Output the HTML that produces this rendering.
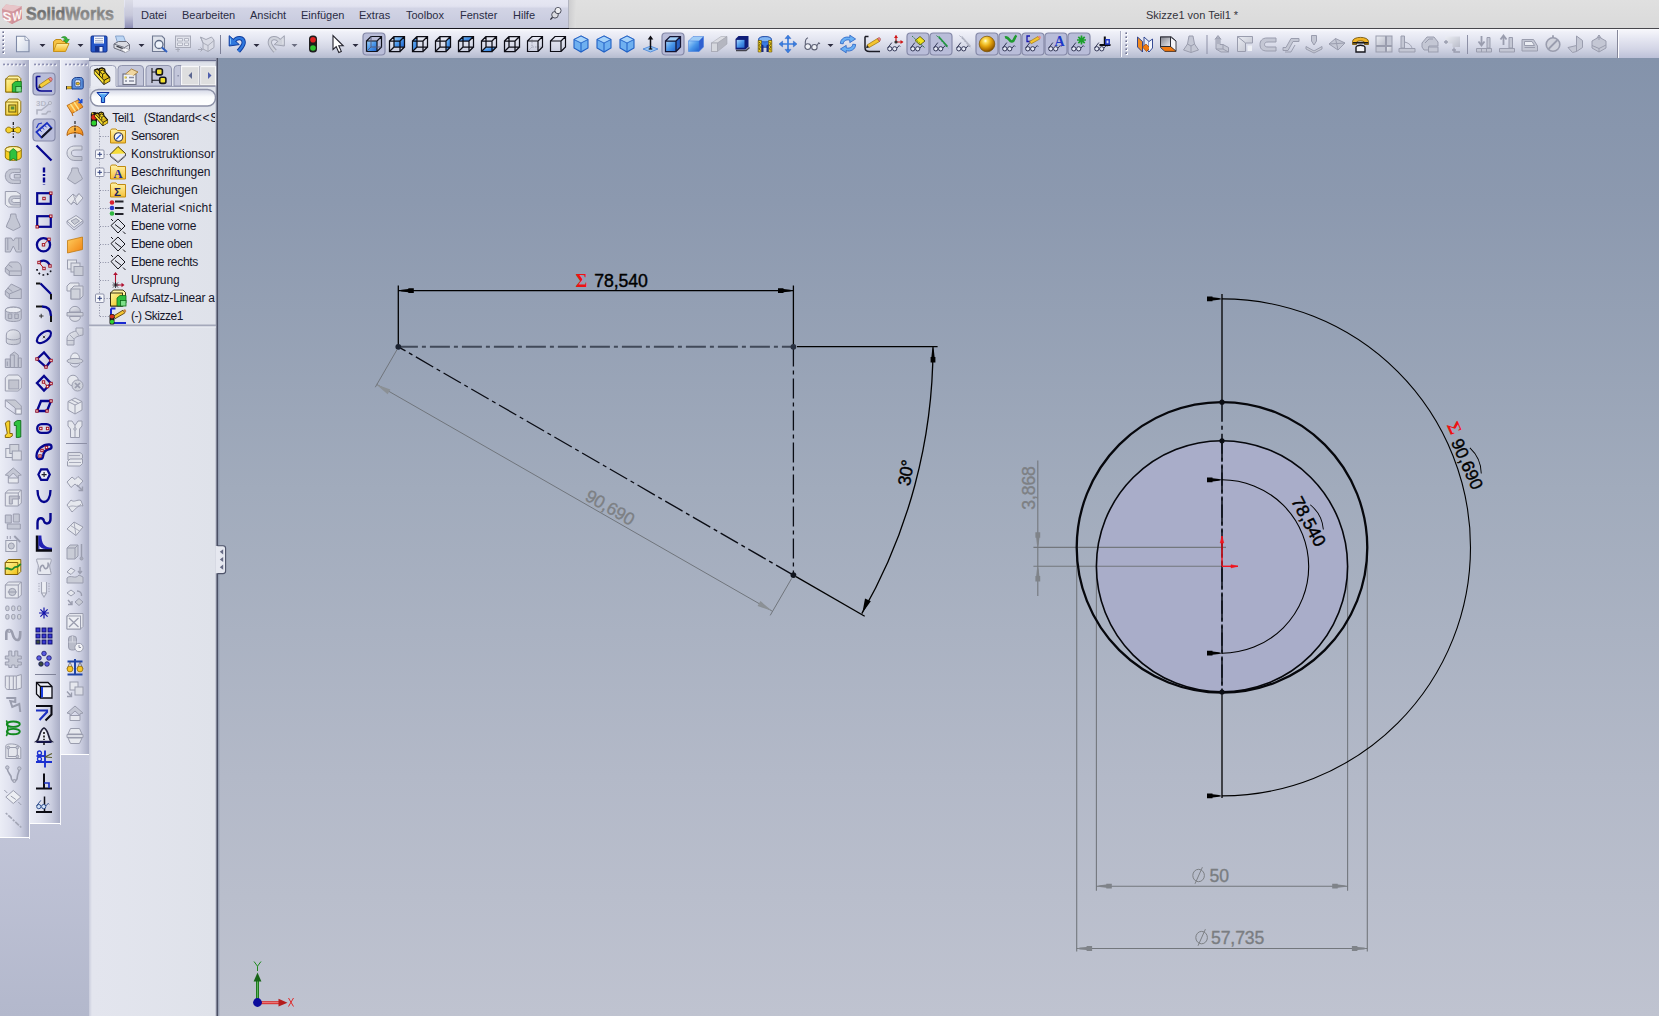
<!DOCTYPE html>
<html><head><meta charset="utf-8">
<style>
*{box-sizing:border-box}
html,body{margin:0;padding:0}
body{width:1659px;height:1016px;position:relative;overflow:hidden;font-family:"Liberation Sans",sans-serif;font-size:11px;color:#1a1a28;background:#b9bdd0}
.abs{position:absolute}
#gfx{left:217px;top:58px;width:1442px;height:958px;background:linear-gradient(#8493ab 0%,#8c99af 15%,#a1abbc 45%,#b3b9c8 75%,#bfc3d0 100%)}
#title{left:0;top:0;width:1659px;height:28px;background:linear-gradient(#e0e0e0,#dadada)}
#titleline{left:0;top:27.7px;width:1659px;height:1.3px;background:#47474d}
#menubar{left:124px;top:0;width:444.6px;height:28px;background:linear-gradient(#e6e7f3 0%,#e2e3f0 22%,#d2d4e5 30%,#c5c8dc 100%);border-right:1px solid #b2b4c0}
#menugrip{left:124.5px;top:0;width:8.5px;height:28px;background:linear-gradient(#dcdde8 0,#c6c7da 55%,#8d8eb5 100%)}
.mi{position:absolute;top:9px;font-size:11px;color:#2a2c44;white-space:nowrap}
#toolbar{left:0;top:29px;width:1659px;height:29px;background:linear-gradient(#fbfbfe 0,#eff0f8 10%,#e4e6f1 35%,#d3d6e5 65%,#bfc4d7 90%,#b5bccf 100%)}
#tbend{left:1617px;top:30px;width:42px;height:28px;background:linear-gradient(#f6f6fb 0,#e6e7f2 30%,#d2d4e5 70%,#bdc1d8 100%);border-left:1px solid #85879a;box-shadow:inset 1px 0 0 #fdfdff}
.col{position:absolute;top:58px;background:linear-gradient(90deg,#ebedf6 0,#e0e2ef 35%,#cbcee0 70%,#a9adc5 100%);border-bottom:1px solid #fff}
#tree{left:89px;top:58px;width:127px;height:958px;background:linear-gradient(90deg,#c9ccdc 0,#e3e5ee 3px,#dfe2ea 100%)}
#treeborder{left:215px;top:58px;width:5px;height:958px;background:linear-gradient(90deg,#d3d6e0 0,#b4b8c8 1.4px,#4a4f64 1.6px,#4a4f64 2.8px,#8c96ab 3px,rgba(140,150,171,0) 5px)}
.tr{position:absolute;left:131px;font-size:12px;color:#16162a;white-space:nowrap;letter-spacing:-0.1px}
svg{position:absolute;left:0;top:0;overflow:visible}
</style></head><body>
<div class="abs" id="gfx"></div>
<div class="abs" id="title"></div>
<div class="abs" id="menubar"></div>
<div class="abs" id="menugrip"></div>
<div class="abs" id="titleline"></div><div class="abs" style="left:568.6px;top:0;width:7px;height:27.7px;background:linear-gradient(90deg,#cdcdcf,#dedede)"></div><div class="abs" style="left:124px;top:27.5px;width:444.6px;height:1.4px;background:#14141c"></div><div class="abs" style="left:0;top:755px;width:89px;height:261px;background:linear-gradient(#c6c9dc,#b3b8cc)"></div>
<div id="menu">
<span class="mi" style="left:141px">Datei</span>
<span class="mi" style="left:182px">Bearbeiten</span>
<span class="mi" style="left:250px">Ansicht</span>
<span class="mi" style="left:301px">Einfügen</span>
<span class="mi" style="left:359px">Extras</span>
<span class="mi" style="left:406px">Toolbox</span>
<span class="mi" style="left:460px">Fenster</span>
<span class="mi" style="left:513px">Hilfe</span>
<span class="mi" style="left:1146px;color:#33333b">Skizze1 von Teil1 *</span>
</div>
<div class="abs" id="toolbar"></div>
<div class="abs" id="tbend"></div>
<!-- left columns -->
<div class="col" style="left:0;width:28.7px;height:780px"></div>
<div class="col" style="left:30px;width:29.7px;height:766px"></div>
<div class="col" style="left:61px;width:27.7px;height:697px"></div><div class="abs" style="left:0;top:57.8px;width:89px;height:2px;background:#f3f4fa"></div><div class="abs" style="left:28.7px;top:58px;width:1.3px;height:781px;background:#f6f7fb"></div><div class="abs" style="left:59.7px;top:58px;width:1.3px;height:767px;background:#f6f7fb"></div>
<div class="abs" id="tree"></div>
<div class="abs" id="treeborder"></div>
<div id="treetext" style="position:absolute;left:0;top:0;width:215.4px;height:400px;overflow:hidden">
<span class="tr" style="left:112.3px;top:111px;letter-spacing:-0.45px">Teil1</span><span class="tr" style="left:143.8px;top:111px;letter-spacing:-0.2px">(Standard</span><span class="tr" style="left:194.7px;top:111px;letter-spacing:0.8px">&lt;&lt;S</span>
<span class="tr" style="top:129px;letter-spacing:-0.473px">Sensoren</span>
<span class="tr" style="top:147px;letter-spacing:0.028px">Konstruktionsor</span>
<span class="tr" style="top:165px;letter-spacing:-0.040px">Beschriftungen</span>
<span class="tr" style="top:183px;letter-spacing:-0.082px">Gleichungen</span>
<span class="tr" style="top:201px;letter-spacing:0.168px">Material &lt;nicht</span>
<span class="tr" style="top:219px;letter-spacing:-0.268px">Ebene vorne</span>
<span class="tr" style="top:237px;letter-spacing:-0.333px">Ebene oben</span>
<span class="tr" style="top:255px;letter-spacing:-0.308px">Ebene rechts</span>
<span class="tr" style="top:273px;letter-spacing:-0.095px">Ursprung</span>
<span class="tr" style="top:291px;letter-spacing:-0.224px">Aufsatz-Linear a</span>
<span class="tr" style="top:309px;letter-spacing:-0.495px">(-) Skizze1</span>
</div>
<svg width="1659" height="1016" viewBox="0 0 1659 1016" style="font-family:'Liberation Sans',sans-serif">
<defs>
<path id="ah" d="M0,0 L-3,-0.9 L-9.5,-1.6 L-9.5,-2.4 L-15,-2.4 L-15,2.4 L-9.5,2.4 L-9.5,1.6 L-3,0.9 Z"/>
</defs>
<!-- LEFT SKETCH -->
<g stroke="#000" stroke-width="1.3" fill="none">
<line x1="398.3" y1="285.5" x2="398.3" y2="345"/>
<line x1="793.4" y1="285.5" x2="793.4" y2="345"/>
<line x1="398.3" y1="290.6" x2="793.4" y2="290.6"/>
<line x1="797" y1="346.6" x2="937.6" y2="346.6"/>
<path d="M933,347 A534.7,534.7 0 0 1 861.8,613.6"/>
<line x1="796" y1="576.6" x2="864.7" y2="616.3"/>
</g>
<use href="#ah" transform="translate(398.8,290.6) rotate(180)" fill="#000"/>
<use href="#ah" transform="translate(793,290.6)" fill="#000"/>
<use href="#ah" transform="translate(933,347.5) rotate(-90)" fill="#000"/>
<path d="M862.3,613 L865,598.5 L870.8,601.2 Z" fill="#000"/>
<g fill="none" stroke-linecap="butt">
<line x1="398.3" y1="346.8" x2="793.4" y2="346.8" stroke="#414959" stroke-width="2" stroke-dasharray="20 4 4 4" stroke-dashoffset="0.4"/>
<line x1="793.4" y1="346.8" x2="793.4" y2="575.1" stroke="#0a0c14" stroke-width="1.3" stroke-dasharray="20 4 4 4" stroke-dashoffset="0.4"/>
<line x1="398.3" y1="346.8" x2="793.4" y2="575.1" stroke="#0a0c14" stroke-width="1.35" stroke-dasharray="20 4 4 4" stroke-dashoffset="11.7"/>
</g>
<circle cx="398.3" cy="346.8" r="2.9" fill="#1b2230"/>
<circle cx="793.4" cy="346.8" r="2.9" fill="#2a3242"/>
<circle cx="793.4" cy="575.1" r="2.9" fill="#12161f"/>
<g stroke="#70757c" stroke-width="1" fill="none">
<line x1="396.8" y1="350" x2="375.3" y2="387.2"/>
<line x1="791.6" y1="578.5" x2="770.2" y2="615.4"/>
<line x1="376.6" y1="384.3" x2="772" y2="611"/>
</g>
<path d="M376,384.3 L390.4,389.4 L387.6,394.2 Z" fill="#8b9095"/>
<path d="M772.2,611 L757.6,605.9 L760.4,601.1 Z" fill="#8b9095"/>
<text x="575.5" y="287" font-size="18" font-weight="bold" fill="#ee1111" font-family="Liberation Serif,serif">Σ</text>
<text x="594.3" y="286.8" font-size="17.7" fill="#000" stroke="#000" stroke-width="0.4" letter-spacing="-0.1">78,540</text>
<text transform="translate(610,507.5) rotate(30)" x="0" y="0" text-anchor="middle" dominant-baseline="central" font-size="17.6" fill="#7d8084" stroke="#7d8084" stroke-width="0.35" letter-spacing="-0.1">90,690</text>
<text transform="translate(906,473) rotate(-80)" x="0" y="0" text-anchor="middle" dominant-baseline="central" font-size="17.7" fill="#000" stroke="#000" stroke-width="0.4" letter-spacing="-0.5">30°</text>

<!-- RIGHT SKETCH -->
<circle cx="1222" cy="566.3" r="125.2" fill="#a9adc9"/>
<g stroke="#73777d" stroke-width="1.1" fill="none">
<line x1="1033.4" y1="547.4" x2="1226" y2="547.4"/>
<line x1="1033.4" y1="566.3" x2="1222" y2="566.3"/>
<line x1="1037.8" y1="460.5" x2="1037.8" y2="596"/>
<line x1="1076.7" y1="547" x2="1076.7" y2="951.6"/>
<line x1="1367.3" y1="547" x2="1367.3" y2="951.6"/>
<line x1="1096.4" y1="566" x2="1096.4" y2="890.7"/>
<line x1="1347.6" y1="566" x2="1347.6" y2="890.7"/>
<line x1="1096.4" y1="886.2" x2="1347.6" y2="886.2"/>
<line x1="1076.7" y1="948.5" x2="1367.3" y2="948.5"/>
</g>
<g fill="#7f8389">
<use href="#ah" transform="translate(1037.8,547.2) rotate(90)"/>
<use href="#ah" transform="translate(1037.8,566.5) rotate(-90)"/>
<use href="#ah" transform="translate(1096.8,886.2) rotate(180)"/>
<use href="#ah" transform="translate(1347.2,886.2)"/>
<use href="#ah" transform="translate(1077.1,948.5) rotate(180)"/>
<use href="#ah" transform="translate(1366.9,948.5)"/>
</g>
<g stroke="#000" fill="none">
<circle cx="1222" cy="547.4" r="145.3" stroke-width="2.3" stroke="#06070c"/>
<circle cx="1222" cy="566.3" r="125.6" stroke-width="1.6" stroke="#06070c"/>
<line x1="1222" y1="294" x2="1222" y2="402" stroke-width="1.3"/>
<line x1="1222" y1="692" x2="1222" y2="798" stroke-width="1.3"/>
<line x1="1222" y1="402.2" x2="1222" y2="692" stroke-width="1.6" stroke="#10131c" stroke-dasharray="20 4 4 4" stroke-dashoffset="0.4"/><line x1="1222" y1="440.8" x2="1222" y2="692" stroke-width="1.6" stroke="#10131c" stroke-dasharray="20 4 4 4" stroke-dashoffset="0.4"/>
<path d="M1222,298.9 A248.5,248.5 0 0 1 1222,795.9" stroke-width="1.1"/>
<path d="M1222,479.8 A86.7,86.7 0 0 1 1222,653.2" stroke-width="1.1"/>
<path transform="translate(1308.5,521.5) rotate(62)" d="M-14,-9.4 Q0,-15.4 14,-9.4" stroke-width="0.9"/>
<path transform="translate(1467,464.5) rotate(66)" d="M-14,-9.4 Q0,-15.4 14,-9.4" stroke-width="0.9"/>
</g>
<g fill="#000"><use href="#ah" transform="translate(1222,298.9)"/><use href="#ah" transform="translate(1222,479.8)"/><use href="#ah" transform="translate(1222,653.2)"/><use href="#ah" transform="translate(1222,795.9)"/></g>
<circle cx="1222" cy="402.2" r="2.6" fill="#0b0d14"/>
<circle cx="1222" cy="440.8" r="2.6" fill="#0b0d14"/>
<circle cx="1222" cy="692" r="2.6" fill="#0b0d14"/>
<g stroke="#f0141e" stroke-width="1.4" fill="#f0141e">
<line x1="1222" y1="566.3" x2="1222" y2="536"/>
<line x1="1222" y1="566.3" x2="1238" y2="566.3"/>
<path d="M1222,536 L1220.2,543 L1223.8,543 Z" stroke-width="0.5"/>
<path d="M1238,566.3 L1231,564.7 L1231,567.9 Z" stroke-width="0.5"/>
</g>
<text transform="translate(1028.5,488) rotate(-90)" text-anchor="middle" dominant-baseline="central" font-size="17.6" fill="#7d8084" stroke="#7d8084" stroke-width="0.35" letter-spacing="-0.1">3,868</text>
<text transform="translate(1308.5,521.5) rotate(62)" text-anchor="middle" dominant-baseline="central" font-size="17.7" fill="#000" stroke="#000" stroke-width="0.4" letter-spacing="-0.1">78,540</text>
<text transform="translate(1467,464) rotate(66)" text-anchor="middle" dominant-baseline="central" font-size="17.7" fill="#000" stroke="#000" stroke-width="0.4" letter-spacing="-0.1">90,690</text>
<text transform="translate(1454.5,428) rotate(66)" text-anchor="middle" dominant-baseline="central" font-size="18" font-weight="bold" fill="#ee1111" font-family="Liberation Serif,serif">Σ</text>
<text x="1209.6" y="882.2" font-size="17.6" fill="#7a7d81" stroke="#7a7d81" stroke-width="0.35" letter-spacing="-0.1">50</text>
<text x="1211" y="944" font-size="17.6" fill="#7a7d81" stroke="#7a7d81" stroke-width="0.35" letter-spacing="-0.1">57,735</text>
<g stroke="#7d8085" stroke-width="1" fill="none">
<ellipse cx="1198.6" cy="875.5" rx="5.8" ry="6.2"/><line x1="1195" y1="883.8" x2="1202.4" y2="867.2"/>
<ellipse cx="1201.6" cy="937.6" rx="5.8" ry="6.2"/><line x1="1198" y1="945.8" x2="1205.4" y2="929.2"/>
</g>
<!-- TRIAD -->
<g>
<line x1="257.5" y1="1002" x2="257.5" y2="979" stroke="#1f7a1f" stroke-width="3"/>
<line x1="257.5" y1="1000" x2="257.5" y2="981" stroke="#6fc06f" stroke-width="0.8"/>
<path d="M257.5,972.5 L253.6,981.5 L261.4,981.5 Z" fill="#176417"/>
<line x1="258" y1="1002.7" x2="281" y2="1002.7" stroke="#d62828" stroke-width="3"/>
<line x1="262" y1="1002.7" x2="279" y2="1002.7" stroke="#f4a0a0" stroke-width="0.8"/>
<path d="M287.5,1002.7 L278.5,998.8 L278.5,1006.6 Z" fill="#b41c1c"/>
<circle cx="257.5" cy="1002.5" r="4.4" fill="#0c0c9c"/>
<path d="M254,961.5L257.5,966.2L261,961.5M257.5,966.2V971" fill="none" stroke="#1f8a1f" stroke-width="1"/>
<path d="M288.5,998L293.5,1006.5M293.5,998L288.5,1006.5" fill="none" stroke="#e02a2a" stroke-width="1"/>
</g>
</svg>
<svg width="1659" height="1016" viewBox="0 0 1659 1016" style="font-family:'Liberation Sans',sans-serif"><defs>
<linearGradient id="gb" x1="0" y1="0" x2="1" y2="1"><stop offset="0" stop-color="#a8d6fb"/><stop offset="0.5" stop-color="#4a97ea"/><stop offset="1" stop-color="#1f62cc"/></linearGradient>
<linearGradient id="gdoc" x1="0" y1="0" x2="1" y2="1"><stop offset="0" stop-color="#ffffff"/><stop offset="1" stop-color="#cdd6e6"/></linearGradient>
<linearGradient id="gfold" x1="0" y1="0" x2="0" y2="1"><stop offset="0" stop-color="#fff0a0"/><stop offset="1" stop-color="#f3b522"/></linearGradient>
<radialGradient id="ggold" cx="0.4" cy="0.3" r="0.7"><stop offset="0" stop-color="#fffde8"/><stop offset="0.18" stop-color="#fbe060"/><stop offset="0.5" stop-color="#e6a810"/><stop offset="0.85" stop-color="#a86a00"/><stop offset="1" stop-color="#7a4a00"/></radialGradient>
<linearGradient id="gyel" x1="0" y1="0" x2="1" y2="1"><stop offset="0" stop-color="#fff6a0"/><stop offset="1" stop-color="#f0c010"/></linearGradient>
<linearGradient id="gor" x1="0" y1="0" x2="1" y2="1"><stop offset="0" stop-color="#ffd060"/><stop offset="1" stop-color="#f08010"/></linearGradient>
<linearGradient id="ggr" x1="0" y1="0" x2="1" y2="1"><stop offset="0" stop-color="#eceef4"/><stop offset="1" stop-color="#b9bcc9"/></linearGradient>
<linearGradient id="ggr2" x1="0" y1="0" x2="1" y2="1"><stop offset="0" stop-color="#80828c"/><stop offset="1" stop-color="#e8e9ee"/></linearGradient><linearGradient id="gsearch" x1="0" y1="0" x2="0" y2="1"><stop offset="0" stop-color="#d4d7e6"/><stop offset="0.45" stop-color="#fafbfd"/><stop offset="1" stop-color="#ffffff"/></linearGradient><linearGradient id="gfold2" x1="0" y1="0" x2="0" y2="1"><stop offset="0" stop-color="#fff3a8"/><stop offset="1" stop-color="#f6c23a"/></linearGradient><linearGradient id="glogo" gradientUnits="userSpaceOnUse" x1="0" y1="7" x2="0" y2="21"><stop offset="0" stop-color="#878787"/><stop offset="0.35" stop-color="#6c6c6c"/><stop offset="1" stop-color="#979797"/></linearGradient><linearGradient id="glogo2" gradientUnits="userSpaceOnUse" x1="0" y1="7" x2="0" y2="21"><stop offset="0" stop-color="#9a9a9a"/><stop offset="0.4" stop-color="#808080"/><stop offset="1" stop-color="#a0a0a0"/></linearGradient></defs>
<rect x="3" y="32" width="2" height="2" fill="#fff"/><rect x="2.4" y="31.4" width="1.6" height="1.6" fill="#6e7191"/>
<rect x="3" y="36" width="2" height="2" fill="#fff"/><rect x="2.4" y="35.4" width="1.6" height="1.6" fill="#6e7191"/>
<rect x="3" y="40" width="2" height="2" fill="#fff"/><rect x="2.4" y="39.4" width="1.6" height="1.6" fill="#6e7191"/>
<rect x="3" y="44" width="2" height="2" fill="#fff"/><rect x="2.4" y="43.4" width="1.6" height="1.6" fill="#6e7191"/>
<rect x="3" y="48" width="2" height="2" fill="#fff"/><rect x="2.4" y="47.4" width="1.6" height="1.6" fill="#6e7191"/>
<rect x="3" y="52" width="2" height="2" fill="#fff"/><rect x="2.4" y="51.4" width="1.6" height="1.6" fill="#6e7191"/>
<g transform="translate(22.5,43.8)"><path d="M-6,-7.5H2.5L6.5,-3.5V8H-6Z" fill="url(#gdoc)" stroke="#7f8aa6" stroke-width="1.1"/><path d="M2.5,-7.5V-3.5H6.5" fill="#f7f9fd" stroke="#8f99b3" stroke-width="0.9"/></g>
<path d="M39.5,44.0 L45.5,44.0 L42.5,47.0 Z" fill="#2b2b3f"/>
<g transform="translate(61,44)"><path d="M-7.5,7.5V-2.5L-5,-4.5H0L1.5,-2.5H4.5V0" fill="#f6c344" stroke="#c08a14" stroke-width="1"/><path d="M-7.5,7.5L-4.5,-0.5H8L4.5,7.5Z" fill="url(#gfold)" stroke="#c8921c" stroke-width="1"/><path d="M0.5,-6.5C3,-8.5 6,-7.5 6.5,-4.5L8.3,-4.7L5.6,-0.8L2.3,-4.1L4.2,-4.3C3.8,-5.8 2.4,-6.4 0.5,-6.5Z" fill="#35b335" stroke="#1b7f1b" stroke-width="0.6"/></g>
<path d="M77.5,44.0 L83.5,44.0 L80.5,47.0 Z" fill="#2b2b3f"/>
<g transform="translate(99,44)"><rect x="-8" y="-8" width="16" height="16" rx="1.2" fill="#2456c8" stroke="#102f8a" stroke-width="1"/><rect x="-5" y="-7.5" width="10" height="7" fill="#f4f6fb"/><path d="M-4,-5.5H4M-4,-3.5H4M-4,-1.8H4" stroke="#9aa4c0" stroke-width="0.8"/><rect x="-4" y="2" width="8.5" height="6" fill="#16328f"/><rect x="0.5" y="3" width="3" height="4.5" fill="#e8ecf8"/></g>
<g transform="translate(121.5,44)"><path d="M-4,-1L-6,-8H2L4.5,-1Z" fill="#bcd6f4" stroke="#7f9cc6" stroke-width="0.9"/><path d="M-7.5,0L-3,-2.5H5L8,0.5V5L3,8L-7.5,4Z" fill="#d9dbe2" stroke="#6a6d7a" stroke-width="1"/><path d="M-7.5,0L3,3.5L8,0.5M3,3.5V8" fill="none" stroke="#6a6d7a" stroke-width="0.9"/><path d="M-5,2.2L1.5,4.6" stroke="#3b3d46" stroke-width="1.3"/><path d="M-1,5.5L4,8.5L8.5,6L4,4Z" fill="#f7f7fa" stroke="#8a8d99" stroke-width="0.6"/></g>
<path d="M138.5,44.0 L144.5,44.0 L141.5,47.0 Z" fill="#2b2b3f"/>
<g transform="translate(159.5,44)"><path d="M-7,-8H2.5L5,-5.5V7.5H-7Z" fill="#dfe3ec" stroke="#6f7890" stroke-width="1.1"/><circle cx="-0.5" cy="0.5" r="4" fill="#eef3fb" stroke="#5d6984" stroke-width="1.3"/><path d="M2.5,3.5L7.5,8" stroke="#2f5fc0" stroke-width="2"/></g>
<g transform="translate(183,44)"><rect x="-7.5" y="-8" width="15" height="11.5" fill="#dfe1ea" stroke="#a7aab8" stroke-width="1"/><path d="M-5.5,-5.5H-0.5V-3H-5.5ZM1.5,-5.5H5.5V-3H1.5ZM-5.5,-1H-0.5V1.5H-5.5ZM1.5,-1H5.5V1.5H1.5Z" fill="#eceef4" stroke="#a7aab8" stroke-width="0.8"/><path d="M-7.5,5.5H-3M-5,3.5V8" stroke="#a7aab8" stroke-width="1.1"/></g>
<g transform="translate(206,44)"><path d="M-5.5,-7L0,-4.5L5.5,-7L8,-4V3.5L2,7.5L-3,5V-1Z" fill="#d9dbe5" stroke="#a5a8b6" stroke-width="1"/><path d="M-3,-1L2,1.5L8,-3.5M2,1.5V7.5M-5.5,-7L-3,-1" fill="none" stroke="#a5a8b6" stroke-width="0.9"/><path d="M-8,5.5H-3.5M-5.5,3.5L-3.5,5.5L-5.5,7.5" fill="none" stroke="#a5a8b6" stroke-width="1"/></g>
<path d="M220.5,35V54" stroke="#7d8098" stroke-width="1"/>
<g transform="translate(237.5,44)"><path d="M-3.5,-3 C-0.5,-7.2 5.8,-6.8 6.2,-1.8 C6.4,1.6 3.4,4.4 0.9,7.2" fill="none" stroke="#0f3c9e" stroke-width="4.3"/><path d="M-8.3,-8.3V2L1.8,0.6Z" fill="#2f78de" stroke="#0f3c9e" stroke-width="1" stroke-linejoin="round"/><path d="M-3.5,-3 C-0.5,-7.2 5.8,-6.8 6.2,-1.8 C6.4,1.6 3.4,4.4 0.9,7.2" fill="none" stroke="#2f78de" stroke-width="2.4"/><path d="M-7,-5.5V0.2" stroke="#7fc0fa" stroke-width="1"/></g>
<path d="M253.5,44.0 L259.5,44.0 L256.5,47.0 Z" fill="#2b2b3f"/>
<g transform="translate(276,44)"><g transform="scale(-1,1)"><path d="M-3.5,-3 C-0.5,-7.2 5.8,-6.8 6.2,-1.8 C6.4,1.6 3.4,4.4 0.9,7.2" fill="none" stroke="#a0a3b2" stroke-width="4.3"/><path d="M-8.3,-8.3V2L1.8,0.6Z" fill="#cfd2db" stroke="#a0a3b2" stroke-width="1" stroke-linejoin="round"/><path d="M-3.5,-3 C-0.5,-7.2 5.8,-6.8 6.2,-1.8 C6.4,1.6 3.4,4.4 0.9,7.2" fill="none" stroke="#cfd2db" stroke-width="2.4"/><path d="M-7,-5.5V0.2" stroke="#e4e6ec" stroke-width="1"/></g></g>
<path d="M291.5,44.0 L297.5,44.0 L294.5,47.0 Z" fill="#6a6d80"/>
<g transform="translate(313,44)"><rect x="-4" y="-8.5" width="8" height="17" rx="3.5" fill="#1d1d1d"/><circle cx="0" cy="-4.2" r="2.8" fill="#e02222"/><circle cx="0" cy="4" r="2.8" fill="#2fc22f"/></g>
<g transform="translate(338,44)"><path d="M-5,-8.5V5.5L-1.8,2.6L0.8,8.5L3.3,7.4L0.8,1.8H5.2Z" fill="#fff" stroke="#22222c" stroke-width="1.1"/></g>
<path d="M352.5,44.0 L358.5,44.0 L355.5,47.0 Z" fill="#2b2b3f"/>
<rect x="363.0" y="33.0" width="22" height="22" rx="3.5" fill="#b9bdd9" stroke="#8589a8" stroke-width="1.2"/>
<g transform="translate(374,44)"><path d="M-7.5,-3L-3.0,-7.5H7.5L3,-3Z" fill="#b9bdd9"/><path d="M3,-3L7.5,-7.5V3.0L3,7.5Z" fill="#b9bdd9"/><rect x="-7.5" y="-3" width="10.5" height="10.5" fill="url(#gb)"/><path d="M-7.5,-3H3V7.5H-7.5ZM-7.5,-3L-3.0,-7.5H7.5V3.0L3,7.5M3,-3L7.5,-7.5" fill="none" stroke="#11131c" stroke-width="1.2"/><path d="M-3,-7.5V3H7.5M-3,3L-7.5,7.5" fill="none" stroke="#555a78" stroke-width="0.9"/></g>
<g transform="translate(397,44)"><path d="M-3.0,-7.5H7.5V3.0H-3.0Z" fill="url(#gb)"/><path d="M-7.5,-3H3V7.5H-7.5ZM-3.0,-7.5H7.5V3.0H-3.0ZM-7.5,-3L-3.0,-7.5M3,-3L7.5,-7.5M-7.5,7.5L-3.0,3.0M3,7.5L7.5,3.0" fill="none" stroke="#0c0c14" stroke-width="1.25"/></g>
<g transform="translate(420,44)"><path d="M-7.5,-3L-3.0,-7.5V3.0L-7.5,7.5Z" fill="url(#gb)"/><path d="M-7.5,-3H3V7.5H-7.5ZM-3.0,-7.5H7.5V3.0H-3.0ZM-7.5,-3L-3.0,-7.5M3,-3L7.5,-7.5M-7.5,7.5L-3.0,3.0M3,7.5L7.5,3.0" fill="none" stroke="#0c0c14" stroke-width="1.25"/></g>
<g transform="translate(443,44)"><path d="M3,-3L7.5,-7.5V3.0L3,7.5Z" fill="url(#gb)"/><path d="M-7.5,-3H3V7.5H-7.5ZM-3.0,-7.5H7.5V3.0H-3.0ZM-7.5,-3L-3.0,-7.5M3,-3L7.5,-7.5M-7.5,7.5L-3.0,3.0M3,7.5L7.5,3.0" fill="none" stroke="#0c0c14" stroke-width="1.25"/></g>
<g transform="translate(466,44)"><path d="M-7.5,-3L-3.0,-7.5H7.5L3,-3Z" fill="url(#gb)"/><path d="M-7.5,-3H3V7.5H-7.5ZM-3.0,-7.5H7.5V3.0H-3.0ZM-7.5,-3L-3.0,-7.5M3,-3L7.5,-7.5M-7.5,7.5L-3.0,3.0M3,7.5L7.5,3.0" fill="none" stroke="#0c0c14" stroke-width="1.25"/></g>
<g transform="translate(489,44)"><path d="M-7.5,7.5L-3.0,3.0H7.5L3,7.5Z" fill="url(#gb)"/><path d="M-7.5,-3H3V7.5H-7.5ZM-3.0,-7.5H7.5V3.0H-3.0ZM-7.5,-3L-3.0,-7.5M3,-3L7.5,-7.5M-7.5,7.5L-3.0,3.0M3,7.5L7.5,3.0" fill="none" stroke="#0c0c14" stroke-width="1.25"/></g>
<g transform="translate(512,44)"><path d="M-7.5,-3H3V7.5H-7.5ZM-3.0,-7.5H7.5V3.0H-3.0ZM-7.5,-3L-3.0,-7.5M3,-3L7.5,-7.5M-7.5,7.5L-3.0,3.0M3,7.5L7.5,3.0" fill="none" stroke="#0c0c14" stroke-width="1.25"/></g>
<g transform="translate(535,44)"><path d="M-3.0,-7.5V3.0H7.5M-7.5,7.5L-3.0,3.0" fill="none" stroke="#9a9cae" stroke-width="0.9" stroke-dasharray="1.5 1.2"/><path d="M-7.5,-3H3V7.5H-7.5ZM-7.5,-3L-3.0,-7.5H7.5V3.0L3,7.5M3,-3L7.5,-7.5" fill="none" stroke="#0c0c14" stroke-width="1.2"/></g>
<g transform="translate(558,44)"><path d="M-7.5,-3H3V7.5H-7.5ZM-7.5,-3L-3.0,-7.5H7.5V3.0L3,7.5M3,-3L7.5,-7.5" fill="none" stroke="#0c0c14" stroke-width="1.2"/></g>
<g transform="translate(581,44)"><path d="M0,-8L7,-4.5V4L0,8L-7,4V-4.5Z" fill="#6fb0f0" stroke="#1f5fc4" stroke-width="1.1"/><path d="M0,-8L7,-4.5L0,-1L-7,-4.5Z" fill="#a8d4fa" stroke="#1f5fc4" stroke-width="0.9"/><path d="M0,-1V8" stroke="#1f5fc4" stroke-width="1"/></g>
<g transform="translate(604,44)"><path d="M0,-8L7,-4.5V4L0,8L-7,4V-4.5Z" fill="#6fb0f0" stroke="#1f5fc4" stroke-width="1.1"/><path d="M0,-8L7,-4.5L0,-1L-7,-4.5Z" fill="#a8d4fa" stroke="#1f5fc4" stroke-width="0.9"/><path d="M0,-1V8" stroke="#1f5fc4" stroke-width="1"/></g>
<g transform="translate(627,44)"><path d="M0,-8L7,-4.5V4L0,8L-7,4V-4.5Z" fill="#6fb0f0" stroke="#1f5fc4" stroke-width="1.1"/><path d="M0,-8L7,-4.5L0,-1L-7,-4.5Z" fill="#a8d4fa" stroke="#1f5fc4" stroke-width="0.9"/><path d="M0,-1V8" stroke="#1f5fc4" stroke-width="1"/></g>
<g transform="translate(650.5,44)"><path d="M-7.5,5L0,2.2L7.5,5L0,8Z" fill="#9cc8f4" stroke="#3f7fd8" stroke-width="0.8"/><path d="M0,5V-5.5" stroke="#0c0c12" stroke-width="1.5"/><path d="M0,-8.5L-2.8,-4.5H2.8Z" fill="#0c0c12"/><path d="M-1.8,5H1.8" stroke="#0c0c12" stroke-width="1.2"/></g>
<rect x="662.0" y="33.0" width="22" height="22" rx="3.5" fill="#b9bdd9" stroke="#8589a8" stroke-width="1.2"/>
<g transform="translate(673,44)"><path d="M-7.5,-3L-3.0,-7.5H7.5L3,-3Z" fill="#9fccf6"/><path d="M3,-3L7.5,-7.5V3.0L3,7.5Z" fill="#2a62c4"/><rect x="-7.5" y="-3" width="10.5" height="10.5" fill="url(#gb)"/><path d="M-7.5,-3H3V7.5H-7.5ZM-7.5,-3L-3.0,-7.5H7.5V3.0L3,7.5M3,-3L7.5,-7.5" fill="none" stroke="#141432" stroke-width="1.25"/></g>
<g transform="translate(696,44)"><path d="M-7.5,-3L-3.0,-7.5H7.5L3,-3Z" fill="#9fccf6"/><path d="M3,-3L7.5,-7.5V3.0L3,7.5Z" fill="#2f5fd0"/><rect x="-7.5" y="-3" width="10.5" height="10.5" fill="url(#gb)"/><path d="M-7.5,-3H3V7.5H-7.5ZM-7.5,-3L-3.0,-7.5H7.5V3.0L3,7.5M3,-3L7.5,-7.5" fill="none" stroke="#3a78dc" stroke-width="0.5"/></g>
<g transform="translate(719,44)"><path d="M-7.5,-1L2,-7.5H8L-1.5,-1Z" fill="#dcdde3" stroke="#a9abb6" stroke-width="0.6"/><path d="M-1.5,-1L8,-7.5V0L-1.5,7.5Z" fill="#b4b6c0" stroke="#a2a4ae" stroke-width="0.6"/><rect x="-7.5" y="-1" width="6" height="8.5" fill="#d6d8de" stroke="#a2a4ae" stroke-width="0.8"/></g>
<g transform="translate(742,43.5)"><path d="M-6.5,-4.5L-3.5,-7.5H6.5V3L3.5,6H-6.5Z" fill="#0e1c78"/><rect x="-5.3" y="-3.6" width="7.8" height="7.8" fill="url(#gb)"/><path d="M-6,7H4L7.5,4" stroke="#2a2a33" stroke-width="1.5" fill="none" opacity="0.85"/></g>
<g transform="translate(765,44)"><path d="M-6.5,-4.5C-6.5,-8.5 6.5,-8.5 6.5,-4.5V5.5C6.5,2.5 -6.5,2.5 -6.5,5.5Z" fill="#3a7ae0" stroke="#123c9c" stroke-width="0.8"/><ellipse cx="0" cy="-4.8" rx="6.3" ry="2.6" fill="#7fb4f2" stroke="#123c9c" stroke-width="0.6"/><path d="M-6.8,-3.5H-3.6V8H-6.8ZM3.6,-3.5H6.8V8H3.6Z" fill="#f4d21c" stroke="#5a4400" stroke-width="0.6"/><path d="M-5.8,-2L-4.6,-0.3L-5.8,1.4L-4.6,3.1L-5.8,4.8L-4.6,6.5M4.6,-2L5.8,-0.3L4.6,1.4L5.8,3.1L4.6,4.8L5.8,6.5" stroke="#4a3800" stroke-width="0.8" fill="none"/><path d="M-3.6,0V8H-1.5V1.5M3.6,0V8H1.5V1.5" fill="#1a2a7c" stroke="none"/></g>
<g transform="translate(788,44)"><path d="M0,-7V7M-7,0H7" stroke="#3a7ee0" stroke-width="1.7"/><path d="M0,-9L-3,-5.4H3ZM0,9L-3,5.4H3ZM-9,0L-5.4,-3V3ZM9,0L5.4,-3V3Z" fill="#3a7ee0" stroke="#1f55b8" stroke-width="0.4"/></g>
<g transform="translate(811,44)"><circle cx="-3.2" cy="2.6" r="2.9" fill="#eef0f6" stroke="#5e6276" stroke-width="1.1"/><circle cx="3.4" cy="3.2" r="2.7" fill="#eef0f6" stroke="#5e6276" stroke-width="1.1"/><path d="M-5.6,0.8C-6,-2.5 -5,-5.5 -3,-6.2M-0.4,2.6L0.8,2.8M5.8,1.8L7.8,-1.2L9,-0.2" fill="none" stroke="#5e6276" stroke-width="1.1"/></g>
<path d="M827.5,44.0 L833.5,44.0 L830.5,47.0 Z" fill="#2b2b3f"/>
<g transform="translate(848,44)"><path d="M-7.6,-0.5C-7.6,-5.5 -2.5,-8 1.8,-6.6L1.8,-8.8L7.6,-5L1.8,-1.4V-3.8C-1.5,-4.8 -4.6,-3.2 -4.8,-0.2Z" fill="#6ab0f4" stroke="#2460c4" stroke-width="0.8"/><path d="M7.6,0.5C7.6,5.5 2.5,8 -1.8,6.6L-1.8,8.8L-7.6,5L-1.8,1.4V3.8C1.5,4.8 4.6,3.2 4.8,0.2Z" fill="#6ab0f4" stroke="#2460c4" stroke-width="0.8"/></g>
<g transform="translate(872,44)"><path d="M-7,-7.5H-3.5M-7,-7.5V3.5C-7,6 -5,7.5 -2.5,7.5H8" fill="none" stroke="#1b1b24" stroke-width="1.5"/><path d="M-5,1L5.5,-5.5L7.5,-2.5L-3,3.6Z" fill="#f4c430" stroke="#9a6f00" stroke-width="0.7"/><path d="M5.5,-5.5L6.8,-6.3C7.8,-6.8 9,-5 8.2,-3.6L7.5,-2.5Z" fill="#ee8888" stroke="#a04040" stroke-width="0.6"/><path d="M-5,1L-6,4.2L-3,3.6Z" fill="#222"/></g>
<g transform="translate(895,44)"><circle cx="-5.2" cy="4.8" r="2.15" fill="#e6eaf6" stroke="#2c3050" stroke-width="0.95"/><circle cx="-0.3" cy="4.8" r="2.15" fill="#e6eaf6" stroke="#2c3050" stroke-width="0.95"/><path d="M-7.3,4 L-3.2,-1.4 M1.8,4.2 L4.2,1.6 L5.2,2.6" fill="none" stroke="#2c3050" stroke-width="0.95"/><path d="M1,-2V-8.5M1,-2H7.5" stroke="#d01818" stroke-width="1.2"/><path d="M1,-9L-1,-6H3ZM8.5,-2L5.5,-4V0Z" fill="#d01818"/><circle cx="1" cy="-2" r="1.6" fill="#333"/></g>
<rect x="907.0" y="33.0" width="22" height="22" rx="3.5" fill="#b9bdd9" stroke="#8589a8" stroke-width="1.2"/>
<g transform="translate(918,44)"><circle cx="-5.2" cy="4.8" r="2.15" fill="#e6eaf6" stroke="#2c3050" stroke-width="0.95"/><circle cx="-0.3" cy="4.8" r="2.15" fill="#e6eaf6" stroke="#2c3050" stroke-width="0.95"/><path d="M-7.3,4 L-3.2,-1.4 M1.8,4.2 L4.2,1.6 L5.2,2.6" fill="none" stroke="#2c3050" stroke-width="0.95"/><path d="M-3,-3.5L2,-7.5L7,-3L2,1Z" fill="#f2e21c" stroke="#4a4a10" stroke-width="0.8"/><path d="M-6,-8L7,4" stroke="#2a7a3a" stroke-width="0.9" stroke-dasharray="2 1"/></g>
<rect x="930.0" y="33.0" width="22" height="22" rx="3.5" fill="#b9bdd9" stroke="#8589a8" stroke-width="1.2"/>
<g transform="translate(941,44)"><circle cx="-5.2" cy="4.8" r="2.15" fill="#e6eaf6" stroke="#2c3050" stroke-width="0.95"/><circle cx="-0.3" cy="4.8" r="2.15" fill="#e6eaf6" stroke="#2c3050" stroke-width="0.95"/><path d="M-7.3,4 L-3.2,-1.4 M1.8,4.2 L4.2,1.6 L5.2,2.6" fill="none" stroke="#2c3050" stroke-width="0.95"/><path d="M-2.5,-7.5L6.5,2.5" stroke="#1f9a3f" stroke-width="1.6"/><path d="M-4.5,-8.5L7.5,4.5" stroke="#1f7a3f" stroke-width="0.8" stroke-dasharray="2 1.5"/></g>
<g transform="translate(964,44)"><circle cx="-5.2" cy="4.8" r="2.15" fill="#e6eaf6" stroke="#2c3050" stroke-width="0.95"/><circle cx="-0.3" cy="4.8" r="2.15" fill="#e6eaf6" stroke="#2c3050" stroke-width="0.95"/><path d="M-7.3,4 L-3.2,-1.4 M1.8,4.2 L4.2,1.6 L5.2,2.6" fill="none" stroke="#2c3050" stroke-width="0.95"/><path d="M-2.5,-7.5L6.5,2.5" stroke="#b5b8c6" stroke-width="1.6"/><path d="M-4.5,-8.5L7.5,4.5" stroke="#9a9db0" stroke-width="0.8" stroke-dasharray="2 1.5"/></g>
<rect x="976.0" y="33.0" width="22" height="22" rx="3.5" fill="#b9bdd9" stroke="#8589a8" stroke-width="1.2"/>
<g transform="translate(987,44)"><circle cx="0" cy="0" r="7.8" fill="url(#ggold)" stroke="#7a5200" stroke-width="0.7"/></g>
<rect x="999.0" y="33.0" width="22" height="22" rx="3.5" fill="#b9bdd9" stroke="#8589a8" stroke-width="1.2"/>
<g transform="translate(1010,44)"><circle cx="-5.2" cy="4.8" r="2.15" fill="#e6eaf6" stroke="#2c3050" stroke-width="0.95"/><circle cx="-0.3" cy="4.8" r="2.15" fill="#e6eaf6" stroke="#2c3050" stroke-width="0.95"/><path d="M-7.3,4 L-3.2,-1.4 M1.8,4.2 L4.2,1.6 L5.2,2.6" fill="none" stroke="#2c3050" stroke-width="0.95"/><path d="M-5,-6.5C-1,-8 -1,-2 2,-2.5C5,-3 4,-7 6.5,-8.5" fill="none" stroke="#1f9a2f" stroke-width="2.6"/></g>
<rect x="1022.0" y="33.0" width="22" height="22" rx="3.5" fill="#b9bdd9" stroke="#8589a8" stroke-width="1.2"/>
<g transform="translate(1033,44)"><circle cx="-5.2" cy="4.8" r="2.15" fill="#e6eaf6" stroke="#2c3050" stroke-width="0.95"/><circle cx="-0.3" cy="4.8" r="2.15" fill="#e6eaf6" stroke="#2c3050" stroke-width="0.95"/><path d="M-7.3,4 L-3.2,-1.4 M1.8,4.2 L4.2,1.6 L5.2,2.6" fill="none" stroke="#2c3050" stroke-width="0.95"/><path d="M-3,-8H-6V-2.5H0" fill="none" stroke="#1818b0" stroke-width="1.3"/><path d="M-3.5,-2.5L5,-7.5L6.8,-5L-1.8,-0.2Z" fill="#f4c430" stroke="#9a6f00" stroke-width="0.6"/><path d="M5,-7.5L6.4,-8.2C7.4,-8.4 8.2,-6.6 7.6,-5.6L6.8,-5Z" fill="#ee8888"/></g>
<rect x="1045.0" y="33.0" width="22" height="22" rx="3.5" fill="#b9bdd9" stroke="#8589a8" stroke-width="1.2"/>
<g transform="translate(1056,44)"><circle cx="-5.2" cy="4.8" r="2.15" fill="#e6eaf6" stroke="#2c3050" stroke-width="0.95"/><circle cx="-0.3" cy="4.8" r="2.15" fill="#e6eaf6" stroke="#2c3050" stroke-width="0.95"/><path d="M-7.3,4 L-3.2,-1.4 M1.8,4.2 L4.2,1.6 L5.2,2.6" fill="none" stroke="#2c3050" stroke-width="0.95"/><text x="-1.5" y="1.5" font-family="Liberation Serif,serif" font-weight="bold" font-size="14" fill="#2038c8">A</text></g>
<rect x="1068.0" y="33.0" width="22" height="22" rx="3.5" fill="#b9bdd9" stroke="#8589a8" stroke-width="1.2"/>
<g transform="translate(1079,44)"><circle cx="-5.2" cy="4.8" r="2.15" fill="#e6eaf6" stroke="#2c3050" stroke-width="0.95"/><circle cx="-0.3" cy="4.8" r="2.15" fill="#e6eaf6" stroke="#2c3050" stroke-width="0.95"/><path d="M-7.3,4 L-3.2,-1.4 M1.8,4.2 L4.2,1.6 L5.2,2.6" fill="none" stroke="#2c3050" stroke-width="0.95"/><path d="M2.5,-8.5V0.5M-2,-4H7M-0.7,-7.2L5.7,-0.8M-0.7,-0.8L5.7,-7.2" stroke="#1aa02a" stroke-width="1.7"/></g>
<g transform="translate(1102,44)"><circle cx="-5.2" cy="4.8" r="2.15" fill="#e6eaf6" stroke="#2c3050" stroke-width="0.95"/><circle cx="-0.3" cy="4.8" r="2.15" fill="#e6eaf6" stroke="#2c3050" stroke-width="0.95"/><path d="M-7.3,4 L-3.2,-1.4 M1.8,4.2 L4.2,1.6 L5.2,2.6" fill="none" stroke="#2c3050" stroke-width="0.95"/><path d="M-2.5,1H8.5M2.8,-7.5V1" stroke="#0c0c12" stroke-width="2"/><path d="M3.8,-4.2H7.2V0H3.8Z" fill="none" stroke="#2038c8" stroke-width="1.5"/></g>
<path d="M1121.5,31V57" stroke="#f8f9fc" stroke-width="1"/><path d="M1120.5,31V57" stroke="#a9acc2" stroke-width="1"/>
<rect x="1126" y="33" width="2" height="2" fill="#fff"/><rect x="1125.4" y="32.4" width="1.6" height="1.6" fill="#6e7191"/>
<rect x="1126" y="37" width="2" height="2" fill="#fff"/><rect x="1125.4" y="36.4" width="1.6" height="1.6" fill="#6e7191"/>
<rect x="1126" y="41" width="2" height="2" fill="#fff"/><rect x="1125.4" y="40.4" width="1.6" height="1.6" fill="#6e7191"/>
<rect x="1126" y="45" width="2" height="2" fill="#fff"/><rect x="1125.4" y="44.4" width="1.6" height="1.6" fill="#6e7191"/>
<rect x="1126" y="49" width="2" height="2" fill="#fff"/><rect x="1125.4" y="48.4" width="1.6" height="1.6" fill="#6e7191"/>
<rect x="1126" y="53" width="2" height="2" fill="#fff"/><rect x="1125.4" y="52.4" width="1.6" height="1.6" fill="#6e7191"/>
<g transform="translate(1145,44)"><path d="M-7.5,-7L-2.5,-2.5V8L-7.5,3Z" fill="#f08a20" stroke="#223a8a" stroke-width="0.9"/><path d="M-1,-7L4,-2.5V8L-1,3Z" fill="#e8ecf8" stroke="#223a8a" stroke-width="0.9"/><path d="M-2.5,3L1,0L5,4L1.5,7.5Z" fill="#f07a10" stroke="#8a3a00" stroke-width="0.6"/><path d="M4,-2.5L7.5,-5V4L4,8" fill="#f4f6fc" stroke="#223a8a" stroke-width="0.9"/></g>
<g transform="translate(1168,44)"><path d="M-7.5,-7H3.5L8,-3V7.5H-3L-7.5,3.5Z" fill="#f4f4f8" stroke="#2c2d36" stroke-width="0.9"/><path d="M-7.5,2.5H2.5L7.5,7H-3Z" fill="#f07a10" stroke="#b85400" stroke-width="0.6"/><rect x="-7.5" y="-7" width="10" height="9.5" fill="url(#ggr2)" stroke="#2c2d36" stroke-width="1"/><path d="M2.5,-7L8,-3M2.5,2.5L8,7" stroke="#2c2d36" stroke-width="0.8"/></g>
<g transform="translate(1191,44)"><g fill="#c4c7d4" stroke="#9a9dae" stroke-width="1"><path d="M-2,-8H2L3.5,0L7.5,6L0,8.5L-7.5,6L-3.5,0Z"/><path d="M-3.5,0L0,2L3.5,0M0,2V8.5" fill="none"/></g></g>
<path d="M1207,35V54" stroke="#8d90a6" stroke-width="1"/>
<g transform="translate(1222,44)"><g fill="#c4c7d4" stroke="#9a9dae" stroke-width="1"><path d="M-6,-6V5L-1,8H6.5V3.5L1,0.5H-2V-6Z"/><path d="M-4,-8.5L-7,-4.5M-4,-8.5L-1,-4.5M-4,-8V0" fill="none"/><path d="M-6,5H1V0.5M1,5L6.5,8" fill="none"/></g></g>
<g transform="translate(1245,44)"><g fill="#c4c7d4" stroke="#9a9dae" stroke-width="1"><path d="M-7.5,-7.5H7.5V-1H0.5V7.5H-7.5Z" fill="url(#ggr)"/><path d="M-7.5,-7.5L0.5,-1" fill="none"/><path d="M2.5,1.5H7V7H2.5Z" fill="#eef0f5" stroke="none"/></g></g>
<g transform="translate(1268,44)"><g fill="#c4c7d4" stroke="#9a9dae" stroke-width="1"><path d="M8,-6H-1C-6,-6 -8,-3 -8,0.5C-8,4.5 -6,7 -1,7H8V3H0C-2.5,3 -3.5,2 -3.5,0.5C-3.5,-1 -2.5,-2 0,-2H8Z"/></g></g>
<g transform="translate(1291,44)"><g fill="#c4c7d4" stroke="#9a9dae" stroke-width="1"><path d="M-8,6.5H-3L2,-2.5H8V-5.5H0L-5,3.5H-8Z"/><path d="M-6,8H0L4,1" fill="none"/></g></g>
<g transform="translate(1314,44)"><g fill="#c4c7d4" stroke="#9a9dae" stroke-width="1"><path d="M-2.5,-8.5H2.5V-3L0,1L-2.5,-3Z"/><path d="M-8,2.5L0,7L8,2.5V5L0,9L-8,5Z" fill="#c9ccd6"/></g></g>
<g transform="translate(1337,44)"><g fill="#c4c7d4" stroke="#9a9dae" stroke-width="1"><path d="M-8,0L-1.5,-5.5L8,-1L1,6Z"/><path d="M-1.5,-5.5L1,6M-8,0L8,-1" fill="none"/></g></g>
<g transform="translate(1360.5,44)"><path d="M-8,-2.5C-8,-8 8,-8 8,-2.5V0.5H4V-2C3,-3.5 -3,-3.5 -4,-2V0.5H-8Z" fill="#f0b428" stroke="#6a4a00" stroke-width="0.8"/><path d="M-7.5,-1.2H7.5" stroke="#1a1a1a" stroke-width="1.6"/><path d="M-4.5,8V3.5C-4.5,0.5 4.5,0.5 4.5,3.5V8Z" fill="#f4f4f6" stroke="#16161c" stroke-width="1.4"/></g>
<g transform="translate(1384,44)"><g fill="#c4c7d4" stroke="#9a9dae" stroke-width="1"><rect x="-8" y="-8" width="9.5" height="9.5" fill="url(#ggr)"/><rect x="2.5" y="-8" width="5.5" height="9.5"/><rect x="-8" y="2.5" width="9.5" height="5.5"/><rect x="2.5" y="2.5" width="5.5" height="5.5" fill="url(#ggr)"/></g></g>
<g transform="translate(1407,44)"><g fill="#c4c7d4" stroke="#9a9dae" stroke-width="1"><path d="M-6,-8H-2.5V4H-6Z"/><path d="M-8,4.5H8V8H-8Z"/><path d="M-2.5,-2C2,-1 4.5,1.5 5,4.5" fill="none"/></g></g>
<g transform="translate(1430,44)"><g fill="#c4c7d4" stroke="#9a9dae" stroke-width="1"><path d="M-8,-1L-3,-7H4L8,-2V2H-1V6H-6L-8,3Z"/><rect x="-1.5" y="3" width="9.5" height="5"/><path d="M-5,-1L-1,-5H3" fill="none"/></g></g>
<g transform="translate(1453,44)"><g fill="#c4c7d4" stroke="#9a9dae" stroke-width="1"><path d="M-7.5,-7.5H7V3H-0.5V-0.5H-7.5Z" fill="url(#ggr)" stroke="none"/><path d="M-7,-4V0M-9,-2H-5M1,3.5V8H7M-1,6H3" fill="none" stroke-width="1.3"/></g></g>
<path d="M1467.5,35V54" stroke="#8d90a6" stroke-width="1"/>
<g transform="translate(1484,44)"><g fill="#c4c7d4" stroke="#9a9dae" stroke-width="1"><path d="M-2.5,-8V0.5M-5.5,-2.5L-2.5,1.5L0.5,-2.5" fill="none" stroke-width="1.8"/><path d="M3,-6.5H6V4H3Z"/><path d="M-7.5,4.5H7.5V8H-7.5ZM-2.5,4.5V8M2.5,4.5V8"/></g></g>
<g transform="translate(1507,44)"><g fill="#c4c7d4" stroke="#9a9dae" stroke-width="1"><path d="M-3.5,1V-7.5M-6.5,-4.5L-3.5,-8.5L-0.5,-4.5" fill="none" stroke-width="1.8"/><path d="M2,-6.5H5.5V4H2Z"/><path d="M-7.5,4.5H7.5V8H-7.5Z"/></g></g>
<g transform="translate(1529.5,44)"><g fill="#c4c7d4" stroke="#9a9dae" stroke-width="1"><path d="M-7.5,-4.5H4L8,2V7H-7.5Z"/><path d="M-5,-2.5H2.5L5,1.5H-5ZM-5,3.5H5.5" fill="#eceef4"/></g></g>
<g transform="translate(1553,44)"><g fill="#c4c7d4" stroke="#9a9dae" stroke-width="1"><circle cx="0" cy="0.5" r="6.8" fill="#d0d2dc" stroke-width="1.6"/><path d="M-4.5,5L4.5,-4M0,-8.8V-6" fill="none" stroke-width="1.8"/></g></g>
<g transform="translate(1576,44)"><g fill="#c4c7d4" stroke="#9a9dae" stroke-width="1"><path d="M0.5,-8L6.5,-3.5V3.5L0.5,7.5Z"/><path d="M-8,3.5L0.5,1.5V7.5L-3.5,8.5Z"/></g></g>
<g transform="translate(1599,44)"><g fill="#c4c7d4" stroke="#9a9dae" stroke-width="1"><path d="M0,-7L7,-3V4L0,8L-7,4V-3Z"/><path d="M-7,1.5L0,4.5L7,1M0,4.5V8M0,-9V-4M-2,-6L0,-9L2,-6" fill="none"/></g></g>
<rect x="4" y="64.4" width="1.8" height="1.8" fill="#fdfdff"/><rect x="3.2" y="63.60000000000001" width="1.7" height="1.7" fill="#7f82a8"/>
<rect x="8" y="64.4" width="1.8" height="1.8" fill="#fdfdff"/><rect x="7.2" y="63.60000000000001" width="1.7" height="1.7" fill="#7f82a8"/>
<rect x="12" y="64.4" width="1.8" height="1.8" fill="#fdfdff"/><rect x="11.2" y="63.60000000000001" width="1.7" height="1.7" fill="#7f82a8"/>
<rect x="16" y="64.4" width="1.8" height="1.8" fill="#fdfdff"/><rect x="15.2" y="63.60000000000001" width="1.7" height="1.7" fill="#7f82a8"/>
<rect x="20" y="64.4" width="1.8" height="1.8" fill="#fdfdff"/><rect x="19.2" y="63.60000000000001" width="1.7" height="1.7" fill="#7f82a8"/>
<rect x="24" y="64.4" width="1.8" height="1.8" fill="#fdfdff"/><rect x="23.2" y="63.60000000000001" width="1.7" height="1.7" fill="#7f82a8"/>
<rect x="35" y="64.4" width="1.8" height="1.8" fill="#fdfdff"/><rect x="34.2" y="63.60000000000001" width="1.7" height="1.7" fill="#7f82a8"/>
<rect x="39" y="64.4" width="1.8" height="1.8" fill="#fdfdff"/><rect x="38.2" y="63.60000000000001" width="1.7" height="1.7" fill="#7f82a8"/>
<rect x="43" y="64.4" width="1.8" height="1.8" fill="#fdfdff"/><rect x="42.2" y="63.60000000000001" width="1.7" height="1.7" fill="#7f82a8"/>
<rect x="47" y="64.4" width="1.8" height="1.8" fill="#fdfdff"/><rect x="46.2" y="63.60000000000001" width="1.7" height="1.7" fill="#7f82a8"/>
<rect x="51" y="64.4" width="1.8" height="1.8" fill="#fdfdff"/><rect x="50.2" y="63.60000000000001" width="1.7" height="1.7" fill="#7f82a8"/>
<rect x="55" y="64.4" width="1.8" height="1.8" fill="#fdfdff"/><rect x="54.2" y="63.60000000000001" width="1.7" height="1.7" fill="#7f82a8"/>
<rect x="66" y="64.4" width="1.8" height="1.8" fill="#fdfdff"/><rect x="65.2" y="63.60000000000001" width="1.7" height="1.7" fill="#7f82a8"/>
<rect x="70" y="64.4" width="1.8" height="1.8" fill="#fdfdff"/><rect x="69.2" y="63.60000000000001" width="1.7" height="1.7" fill="#7f82a8"/>
<rect x="74" y="64.4" width="1.8" height="1.8" fill="#fdfdff"/><rect x="73.2" y="63.60000000000001" width="1.7" height="1.7" fill="#7f82a8"/>
<rect x="78" y="64.4" width="1.8" height="1.8" fill="#fdfdff"/><rect x="77.2" y="63.60000000000001" width="1.7" height="1.7" fill="#7f82a8"/>
<rect x="82" y="64.4" width="1.8" height="1.8" fill="#fdfdff"/><rect x="81.2" y="63.60000000000001" width="1.7" height="1.7" fill="#7f82a8"/>
<rect x="86" y="64.4" width="1.8" height="1.8" fill="#fdfdff"/><rect x="85.2" y="63.60000000000001" width="1.7" height="1.7" fill="#7f82a8"/>
<g transform="translate(13.3,84)"><path d="M-7.5,-5L-4.5,-8H5L7.5,-5.5V5L4.5,8H-7.5Z" fill="#fff3a0" stroke="#8a6a00" stroke-width="0.9"/><rect x="-7.5" y="-5" width="12" height="13" fill="url(#gyel)" stroke="#8a6a00" stroke-width="0.9"/><path d="M-1,0L2,-2.5H8V4.5L5.5,8H-1Z" fill="#2fbf3f" stroke="#0f6a1a" stroke-width="0.8"/><rect x="2.5" y="2.5" width="5.5" height="5.5" fill="#7fe08a" stroke="#0f6a1a" stroke-width="0.8"/></g>
<g transform="translate(13.3,107)"><path d="M-7.5,-5L-4.5,-8H5L7.5,-5.5V5L4.5,8H-7.5Z" fill="#fff3a0" stroke="#8a6a00" stroke-width="0.9"/><rect x="-7.5" y="-5" width="12" height="13" fill="url(#gyel)" stroke="#8a6a00" stroke-width="0.9"/><rect x="-4.5" y="-2" width="7" height="7" fill="#e8d23a" stroke="#6a5a10" stroke-width="1"/><rect x="-2.5" y="-0.5" width="3.5" height="3" fill="#5a8a3a"/></g>
<g transform="translate(13.3,130)"><path d="M-7.5,0C-7.5,-3.5 -3,-3.5 -2,-1.5H2C3,-3.5 7.5,-3.5 7.5,0C7.5,3.5 3,3.5 2,1.5H-2C-3,3.5 -7.5,3.5 -7.5,0Z" fill="#f6d22c" stroke="#8a6a00" stroke-width="0.9"/><path d="M0,-8V8" stroke="#111" stroke-width="1.2" stroke-dasharray="3 1.5 1 1.5"/></g>
<g transform="translate(13.3,153)"><path d="M-8,-3.5C-8,-7.5 8,-7.5 8,-3.5V4C8,8.5 -8,8.5 -8,4Z" fill="#f4cf22" stroke="#8a6a00" stroke-width="0.9"/><ellipse cx="0" cy="-3.5" rx="8" ry="3" fill="#fff3a0" stroke="#8a6a00" stroke-width="0.8"/><path d="M-3.5,7.5V-1.5L0,-4.5L3.5,-1.5V7.5L0,5.5Z" fill="#2fc23f" stroke="#0f6a1a" stroke-width="0.7"/></g>
<g transform="translate(13.3,176)"><g fill="#c4c7d4" stroke="#9a9dae" stroke-width="1"><path d="M7,-7H0C-5,-7 -8,-4 -8,0C-8,4 -5,7.5 0,7.5H7V4H1C-2,4 -3.5,2.5 -3.5,0C-3.5,-2.5 -2,-3.5 1,-3.5H7Z"/><path d="M1,-1.5H7V2H1Z"/></g></g>
<g transform="translate(13.3,199)"><g fill="#c4c7d4" stroke="#9a9dae" stroke-width="1"><path d="M-8,-7.5H3L7,-5V8H-5L-8,5.5Z" fill="#e7e9ef"/><path d="M7,-3H0C-3,-3 -4.5,-1 -4.5,1.5C-4.5,4 -3,6 0,6H7V3.5H1C-0.5,3.5 -1.5,2.8 -1.5,1.5C-1.5,0.2 -0.5,-0.5 1,-0.5H7Z"/></g></g>
<g transform="translate(13.3,222)"><g fill="#c4c7d4" stroke="#9a9dae" stroke-width="1"><path d="M-2.5,-8H2.5C2.5,-3 6.5,1 7,5L0,8.5L-7,5C-6.5,1 -2.5,-3 -2.5,-8Z"/></g></g>
<g transform="translate(13.3,245)"><g fill="#c4c7d4" stroke="#9a9dae" stroke-width="1"><path d="M-8,-7H-2L0,-4L2,-7H8V7H3L0,1L-3,7H-8Z"/><path d="M-5.5,-7V5M5.5,-7V5" fill="none"/></g></g>
<g transform="translate(13.3,268)"><g fill="#c4c7d4" stroke="#9a9dae" stroke-width="1"><path d="M-8,0L-3,-6H3C6,-6 8,-3 8,0V7.5H-4L-8,4Z"/><path d="M-8,0L-4,3V7.5M-4,3H8M-5,-3.5L-1,-0.5" fill="none"/></g></g>
<g transform="translate(13.3,291)"><g fill="#c4c7d4" stroke="#9a9dae" stroke-width="1"><path d="M-8,0L-2,-7L8,-2V7.5H-4L-8,4Z"/><path d="M-8,0L-4,3V7.5M-4,3L8,-2M-5.5,-3L-1,0.5" fill="none"/></g></g>
<g transform="translate(13.3,314)"><g fill="#c4c7d4" stroke="#9a9dae" stroke-width="1"><path d="M-8,-4C-8,-8 8,-8 8,-4V4.5C8,8.5 -8,8.5 -8,4.5Z"/><ellipse cx="0" cy="-4" rx="8" ry="2.8" fill="#e9ebf1"/><path d="M-5,0H-1.5V4.5H-5ZM1.5,0H5V4.5H1.5Z" fill="#bfc2cd"/></g></g>
<g transform="translate(13.3,337)"><g fill="#c4c7d4" stroke="#9a9dae" stroke-width="1"><path d="M-7,-2C-7,-9 7,-9 7,-2V5C7,8.5 -7,8.5 -7,5Z" fill="url(#ggr)"/><path d="M-7,1C-4,3.5 4,3.5 7,1" fill="none"/></g></g>
<g transform="translate(13.3,360)"><g fill="#c4c7d4" stroke="#9a9dae" stroke-width="1"><path d="M-8,-1H-3V7.5H-8ZM-3,-5L1,-8L5,-5V7.5H-3ZM5,-2H8V7.5H5Z"/><path d="M-3,-5H1V7.5M-6,1.5V6" fill="none"/></g></g>
<g transform="translate(13.3,383)"><g fill="#c4c7d4" stroke="#9a9dae" stroke-width="1"><path d="M-8,-5L-5,-8H5L8,-5V5L5,8H-8Z" fill="#e4e6ed"/><rect x="-4.5" y="-3" width="10" height="9" fill="#c2c4cf"/></g></g>
<g transform="translate(13.3,406)"><g fill="#c4c7d4" stroke="#9a9dae" stroke-width="1"><path d="M-8,-6H2L8,0V8H2V2L-8,-6Z" fill="#c6c9d3"/><path d="M-8,-6V1L2,8" fill="none"/><rect x="2.5" y="3" width="5.5" height="5" fill="#eef0f5"/></g></g>
<g transform="translate(13.3,429)"><path d="M-8,-6L-5.5,-8H-3.5V4.5H-1V7L-3.5,8.5H-8V6L-6,4.5Z" fill="#f6d22c" stroke="#7a5a00" stroke-width="0.9"/><path d="M1,-6.5L4,-8.5H7.5V8L4.5,8.5H3V-3.5H1Z" fill="#2fc23f" stroke="#0f6a1a" stroke-width="0.9"/></g>
<g transform="translate(13.3,452)"><g fill="#c4c7d4" stroke="#9a9dae" stroke-width="1"><rect x="-7.5" y="-3.5" width="9" height="9" fill="#e4e6ed"/><rect x="-3.5" y="-7.5" width="9" height="9" fill="#d0d3dc"/><rect x="-1" y="-1" width="9" height="9" fill="#dcdee6"/></g></g>
<g transform="translate(13.3,475)"><g fill="#c4c7d4" stroke="#9a9dae" stroke-width="1"><path d="M-8,0L0,-7L8,0L5,0.5V3L0,-2L-5,3V0.5Z"/><path d="M-5,3H5V8H-5Z" fill="#e6e8ee"/></g></g>
<g transform="translate(13.3,498)"><g fill="#c4c7d4" stroke="#9a9dae" stroke-width="1"><path d="M-8,-5L-5,-8H8V5L5,8H-8Z" fill="#e4e6ed"/><path d="M-4,-2H6V1H-1V6H-4Z" fill="#c2c4cf"/><path d="M-8,-5H5V8M5,-5L8,-8" fill="none"/></g></g>
<g transform="translate(13.3,521)"><g fill="#c4c7d4" stroke="#9a9dae" stroke-width="1"><path d="M-8,-6H-2V2H-8ZM0,-7H6V1H0Z"/><path d="M-6,3H7V8H-6Z"/></g></g>
<g transform="translate(13.3,544)"><g fill="#c4c7d4" stroke="#9a9dae" stroke-width="1"><rect x="-7.5" y="-3.5" width="11" height="11" fill="#e4e6ed"/><circle cx="-2" cy="2" r="3" fill="#c6c9d3"/><path d="M1,-8L7,-2" fill="none" stroke-width="1.8"/><path d="M-6,-8V-5M-3,-8V-5" fill="none"/></g></g>
<g transform="translate(13.3,567)"><path d="M-8,-4.5L-5,-7.5H7.5V4.5L4.5,7.5H-8Z" fill="#ffe96a" stroke="#7a5a00" stroke-width="0.9"/><path d="M-8,-4.5H4.5V7.5H-8Z" fill="url(#gyel)" stroke="#7a5a00" stroke-width="0.9"/><path d="M-8,2C-5,-1 -3,5 0,1.5C2,-1 3,0.5 4.5,-0.5L7.5,-3" fill="none" stroke="#1f8a2f" stroke-width="1.8"/></g>
<g transform="translate(13.3,590)"><g fill="#c4c7d4" stroke="#9a9dae" stroke-width="1"><path d="M-8,-5L-5,-8H8V5L5,8H-8Z" fill="#e4e6ed"/><path d="M-8,-5H5V8M5,-5L8,-8" fill="none"/><circle cx="-1" cy="2" r="3.6" fill="#c6c9d3"/><path d="M-5.5,2H3.5" fill="none"/></g></g>
<g transform="translate(13.3,613)"><g fill="#c4c7d4" stroke="#9a9dae" stroke-width="1"><rect x="-7.5" y="-7" width="3.2" height="4.6" rx="1.2" fill="#d0d3dc"/><rect x="-1.6" y="-7" width="3.2" height="4.6" rx="1.2" fill="#d0d3dc"/><rect x="4.3" y="-7" width="3.2" height="4.6" rx="1.2" fill="#d0d3dc"/><rect x="-7.5" y="1.5" width="3.2" height="4.6" rx="1.2" fill="#d0d3dc"/><rect x="-1.6" y="1.5" width="3.2" height="4.6" rx="1.2" fill="#d0d3dc"/><rect x="4.3" y="1.5" width="3.2" height="4.6" rx="1.2" fill="#d0d3dc"/></g></g>
<g transform="translate(13.3,636)"><g fill="#c4c7d4" stroke="#9a9dae" stroke-width="1"><path d="M-7,4V-3C-7,-7 -2,-7 -1,-3C0,1 1,4 4,4C7,4 7,0 7,-5" fill="none" stroke-width="2.6"/><circle cx="-4" cy="-5" r="1.5"/></g></g>
<g transform="translate(13.3,659)"><g fill="#c4c7d4" stroke="#9a9dae" stroke-width="1"><path d="M-4.5,-8H-1.5V-3H1.5V-8H4.5V-3H8V0H4.5V3H8V6H4.5V8.5H1.5V6H-1.5V8.5H-4.5V6H-8V3H-4.5V0H-8V-3H-4.5Z"/></g></g>
<g transform="translate(13.3,682)"><g fill="#c4c7d4" stroke="#9a9dae" stroke-width="1"><path d="M-8,-6H3L8,-7.5V6L3,7.5H-5.5C-7,7.5 -8,6 -8,4.5Z" fill="#e4e6ed"/><path d="M-4,-6V7.5M0,-6V7.5M3,-6V7.5" fill="none"/></g></g>
<g transform="translate(13.3,705)"><g fill="#c4c7d4" stroke="#9a9dae" stroke-width="1"><path d="M-7,-7H2V-3L-3,-4L-1,2L6,-1L7,7" fill="none" stroke-width="2"/></g></g>
<g transform="translate(13.3,728)"><ellipse cx="0" cy="-3.8" rx="6.5" ry="2.7" fill="none" stroke="#128a1f" stroke-width="1.9"/><ellipse cx="0" cy="3.6" rx="6.5" ry="2.7" fill="none" stroke="#128a1f" stroke-width="1.9"/><path d="M-7,-7.5C-5,-5 -5,5 -7,8" fill="none" stroke="#128a1f" stroke-width="1.6"/></g>
<g transform="translate(13.3,751)"><g fill="#c4c7d4" stroke="#9a9dae" stroke-width="1"><path d="M-7.5,-5C-7.5,-8 5,-8 7.5,-3V7.5H-7.5Z" fill="#e4e6ed"/><rect x="-5" y="-3.5" width="9" height="9" fill="none"/><circle cx="-5" cy="-3.5" r="1.4"/><circle cx="4" cy="5.5" r="1.4"/><circle cx="4" cy="-3.5" r="1.4"/></g></g>
<g transform="translate(13.3,774)"><g fill="#c4c7d4" stroke="#9a9dae" stroke-width="1"><path d="M-6,-6C-6,0 -2,0 -2,4C-2,8 4,8 4,3C4,0 6,-2 6,-5" fill="none" stroke-width="1.6"/><circle cx="-6" cy="-6.5" r="1.7"/><circle cx="6" cy="-5.5" r="1.7"/><circle cx="1" cy="7" r="1.5"/></g></g>
<g transform="translate(13.3,797)"><g fill="#c4c7d4" stroke="#9a9dae" stroke-width="1"><path d="M-7.5,0L0,-6.5L7.5,0L0,6.5Z" fill="#eceef3"/><path d="M-2.5,-1L2.5,2.5M-9,-7L-6,-4M5,5L8,8" fill="none"/></g></g>
<g transform="translate(13.3,820)"><path d="M-7.5,-7L8,7.5" stroke="#a4a7b6" stroke-width="1.7" stroke-dasharray="2.2 1.2 5 1.2"/></g>
<rect x="33.0" y="73.0" width="22" height="22" rx="3.5" fill="#b9bdd9" stroke="#8589a8" stroke-width="1.2"/>
<g transform="translate(44,84)"><path d="M-7.5,-7.5H-3.5M-7.5,-7.5V2C-7.5,5.5 -5.5,7 -2.5,7H8" fill="none" stroke="#06068e" stroke-width="1.7"/><path d="M-5,1L4.5,-5.5L6.8,-2.5L-2.8,3.8Z" fill="#f6cf3a" stroke="#9a6f00" stroke-width="0.7"/><path d="M4.5,-5.5L6,-6.5C7.5,-7 8.8,-5 8,-3.6L6.8,-2.5Z" fill="#ee8a8a" stroke="#a04040" stroke-width="0.6"/><path d="M-5,1L-6,4.4L-2.8,3.8Z" fill="#333"/></g>
<g transform="translate(44,107)"><text x="-8" y="-1" font-size="8" font-weight="bold" fill="#b7bac8">3D</text><path d="M-7,7.5V3H-2.5L5,-3M-2.5,7H2L4,4.5H7" fill="none" stroke="#aeb1c0" stroke-width="1.5"/><circle cx="6" cy="-4" r="1.6" fill="#d4d6e0" stroke="#aeb1c0"/></g>
<rect x="33.0" y="119.0" width="22" height="22" rx="3.5" fill="#b9bdd9" stroke="#8589a8" stroke-width="1.2"/>
<g transform="translate(44,130)"><path d="M-7.5,2L3,-7L7.5,-2L-2.5,7.5Z" fill="#c9cdea" stroke="#1a2fc0" stroke-width="1.8"/><path d="M-2.5,7.5L7.5,-2" stroke="#15151f" stroke-width="2"/><path d="M-4,0L-2.5,1.7M-1.5,-2.2L0,-0.5M1,-4.4L2.5,-2.7" stroke="#1a2fc0" stroke-width="1"/><path d="M-7.5,-2L-5.5,-6L-2,-7" fill="none" stroke="#1a2fc0" stroke-width="1.2"/></g>
<g transform="translate(44,153)"><path d="M-7.5,-7.5L7.5,7.5" stroke="#06068e" stroke-width="2.3"/></g>
<g transform="translate(44,176)"><path d="M0,-8.5V8.5" stroke="#06068e" stroke-width="2.4" stroke-dasharray="5 1.6 1.8 1.6"/></g>
<g transform="translate(44,198.5)"><rect x="-6.8" y="-5.3" width="13.6" height="10.6" fill="none" stroke="#06068e" stroke-width="2.2"/><rect x="-1.7" y="-1.7" width="3.4" height="3.4" fill="#a01424"/><rect x="-0.7" y="-0.7" width="1.4" height="1.4" fill="#fff6f6"/><rect x="5.1" y="-7.0" width="3.4" height="3.4" fill="#a01424"/><rect x="6.1" y="-6.0" width="1.4" height="1.4" fill="#fff6f6"/></g>
<g transform="translate(44,221.5)"><rect x="-6.8" y="-5.3" width="13.6" height="10.6" fill="none" stroke="#06068e" stroke-width="2.2"/><rect x="-8.5" y="3.5999999999999996" width="3.4" height="3.4" fill="#a01424"/><rect x="-7.5" y="4.6" width="1.4" height="1.4" fill="#fff6f6"/><rect x="5.1" y="-7.0" width="3.4" height="3.4" fill="#a01424"/><rect x="6.1" y="-6.0" width="1.4" height="1.4" fill="#fff6f6"/></g>
<g transform="translate(44,244.3)"><circle cx="-0.5" cy="0.5" r="6.6" fill="none" stroke="#06068e" stroke-width="2.3"/><path d="M-0.5,0.5L5,-5" stroke="#c01818" stroke-width="1"/><rect x="-2.2" y="-1.2" width="3.4" height="3.4" fill="#a01424"/><rect x="-1.2" y="-0.19999999999999996" width="1.4" height="1.4" fill="#fff6f6"/><rect x="3.3" y="-6.7" width="3.4" height="3.4" fill="#a01424"/><rect x="4.3" y="-5.7" width="1.4" height="1.4" fill="#fff6f6"/></g>
<g transform="translate(44,268)"><path d="M-5,-5.5C-2,-8.5 4,-8 6,-2" fill="none" stroke="#06068e" stroke-width="2.2"/><path d="M-5,-5.5L0,0.5" stroke="#c01818" stroke-width="1"/><path d="M-7,1C-6.5,9 7,9 7,1" fill="none" stroke="#15151f" stroke-width="1.7" stroke-dasharray="1.7 2.6"/><rect x="-6.7" y="-7.2" width="3.4" height="3.4" fill="#a01424"/><rect x="-5.7" y="-6.2" width="1.4" height="1.4" fill="#fff6f6"/><rect x="-1.7" y="-1.2" width="3.4" height="3.4" fill="#a01424"/><rect x="-0.7" y="-0.19999999999999996" width="1.4" height="1.4" fill="#fff6f6"/><rect x="4.3" y="-3.7" width="3.4" height="3.4" fill="#a01424"/><rect x="5.3" y="-2.7" width="1.4" height="1.4" fill="#fff6f6"/></g>
<g transform="translate(44,291)"><path d="M-8,-7.5H-3.5" stroke="#111" stroke-width="2"/><path d="M-3.5,-7.5L7,3" stroke="#06068e" stroke-width="2.3"/><path d="M7,3V8.5" stroke="#111" stroke-width="2"/></g>
<g transform="translate(44,314)"><path d="M-8,-7.5H-2" stroke="#111" stroke-width="2"/><path d="M-2,-7.5C4,-7.5 7,-4 7,2" fill="none" stroke="#06068e" stroke-width="2.3"/><path d="M7,2V8" stroke="#111" stroke-width="2"/><path d="M-5,2H-0.5M-2.8,-0.2V4.2" stroke="#222" stroke-width="0.9"/></g>
<g transform="translate(44,337)"><ellipse cx="0" cy="0" rx="8.3" ry="4.3" transform="rotate(-38)" fill="none" stroke="#06068e" stroke-width="2.2"/><path d="M-1.2,-1.2L1.2,1.2M1.2,-1.2L-1.2,1.2" stroke="#222" stroke-width="0.8"/></g>
<g transform="translate(44,360)"><path d="M-7,-1L0,-7.5L7,0.5L2,7Z" fill="none" stroke="#06068e" stroke-width="2.3"/><rect x="-8.7" y="-2.7" width="3.4" height="3.4" fill="#a01424"/><rect x="-7.7" y="-1.7" width="1.4" height="1.4" fill="#fff6f6"/><rect x="5.3" y="-1.2" width="3.4" height="3.4" fill="#a01424"/><rect x="6.3" y="-0.19999999999999996" width="1.4" height="1.4" fill="#fff6f6"/><rect x="0.30000000000000004" y="5.3" width="3.4" height="3.4" fill="#a01424"/><rect x="1.3" y="6.3" width="1.4" height="1.4" fill="#fff6f6"/></g>
<g transform="translate(44,383)"><path d="M-7,0L0,-7L7,0.5L0,7.5Z" fill="none" stroke="#06068e" stroke-width="2.4"/><path d="M-0.5,-1L3.5,3.5" stroke="#c01818" stroke-width="0.9"/><rect x="-2.2" y="-2.7" width="3.4" height="3.4" fill="#a01424"/><rect x="-1.2" y="-1.7" width="1.4" height="1.4" fill="#fff6f6"/><rect x="1.8" y="1.8" width="3.4" height="3.4" fill="#a01424"/><rect x="2.8" y="2.8" width="1.4" height="1.4" fill="#fff6f6"/><rect x="5.3" y="-1.2" width="3.4" height="3.4" fill="#a01424"/><rect x="6.3" y="-0.19999999999999996" width="1.4" height="1.4" fill="#fff6f6"/></g>
<g transform="translate(44,406)"><path d="M-7,5L-3,-5H7L3,5Z" fill="none" stroke="#06068e" stroke-width="2.3"/><rect x="-8.7" y="3.3" width="3.4" height="3.4" fill="#a01424"/><rect x="-7.7" y="4.3" width="1.4" height="1.4" fill="#fff6f6"/><rect x="5.3" y="-6.7" width="3.4" height="3.4" fill="#a01424"/><rect x="6.3" y="-5.7" width="1.4" height="1.4" fill="#fff6f6"/><rect x="1.3" y="3.3" width="3.4" height="3.4" fill="#a01424"/><rect x="2.3" y="4.3" width="1.4" height="1.4" fill="#fff6f6"/></g>
<g transform="translate(44,428.5)"><rect x="-6.8" y="-4.4" width="13.8" height="8.8" rx="4.4" fill="none" stroke="#06068e" stroke-width="2.3"/><rect x="-4.9" y="-1.7" width="3.4" height="3.4" fill="#a01424"/><rect x="-3.9000000000000004" y="-0.7" width="1.4" height="1.4" fill="#fff6f6"/><rect x="1.9000000000000001" y="-1.7" width="3.4" height="3.4" fill="#a01424"/><rect x="2.9000000000000004" y="-0.7" width="1.4" height="1.4" fill="#fff6f6"/></g>
<g transform="translate(44,452)"><path d="M-7.5,4C-7.5,-3 -1,-7.5 5,-7.5C8,-7.5 8.5,-3.5 5.5,-3C2,-2.5 -0.5,0 -1,4.5C-1.5,8 -7.5,8 -7.5,4Z" fill="none" stroke="#06068e" stroke-width="2.3"/><rect x="-5.7" y="2.3" width="3.4" height="3.4" fill="#a01424"/><rect x="-4.7" y="3.3" width="1.4" height="1.4" fill="#fff6f6"/><rect x="-3.7" y="-3.2" width="3.4" height="3.4" fill="#a01424"/><rect x="-2.7" y="-2.2" width="1.4" height="1.4" fill="#fff6f6"/><rect x="0.8" y="-6.2" width="3.4" height="3.4" fill="#a01424"/><rect x="1.8" y="-5.2" width="1.4" height="1.4" fill="#fff6f6"/></g>
<g transform="translate(44,474.6)"><path d="M-5.6,0L-2.9,-5.3H3.1L5.8,0L3.1,5.3H-2.9Z" fill="#e9ebf7" stroke="#06068e" stroke-width="2.2"/><path d="M-2.4,0H2.6M0.1,-2.5V2.5" stroke="#1c1c28" stroke-width="1.1"/></g>
<g transform="translate(44,498)"><path d="M-6.5,-8C-6.5,8 6.5,8 6.5,-8" fill="none" stroke="#06068e" stroke-width="2.3"/></g>
<g transform="translate(44,521)"><path d="M-6.5,8.5V2C-6.5,-4 -1,-4 0,0C1,3.5 6.5,3.5 6.5,-2V-8" fill="none" stroke="#06068e" stroke-width="2.4"/></g>
<g transform="translate(44,544)"><path d="M-5.8,-8.5H-2.6C-2.6,-0.5 0.5,3.8 8,3.8V6.5H-5.8Z" fill="#2222b4"/><path d="M-4.6,1.5C-3.8,3.6 -1.5,4.8 1.5,5L-4.6,5.2Z" fill="#e6e8f8"/><path d="M-7,-8.5V6.5H8" fill="none" stroke="#0a0a12" stroke-width="2.4"/></g>
<g transform="translate(44,567)"><g fill="#c4c7d4" stroke="#9a9dae" stroke-width="1"><path d="M-7,-8H6.5C8,-8 7,-5 6,-3C4.5,0 8.5,7.5 6.5,7.5H-5C-8.5,7.5 -4.5,0.5 -6,-2.5C-7,-5 -8,-8 -7,-8Z" fill="#e6e8ef"/><path d="M-3.5,4.5C-5,0 -1,-4 0,0C1,3 5,2 4,-4.5" fill="none" stroke-width="1.6"/></g></g>
<g transform="translate(44,590)"><path d="M-2.5,-8V3L0,7L2.5,3V-8M-2.5,3H2.5" fill="#eceef4" stroke="#a3a6b6" stroke-width="1.1"/><path d="M-5,-7V2M5,-7V2" stroke="#a3a6b6" stroke-width="1" stroke-dasharray="1.3 1.3"/></g>
<g transform="translate(44,613)"><path d="M0,-5.5V5.5M-5,0H5M-3.6,-3.6L3.6,3.6M-3.6,3.6L3.6,-3.6" stroke="#1414a8" stroke-width="1.2"/></g>
<g transform="translate(44,636)"><rect x="-8" y="-8" width="4" height="4" fill="#3838d0" stroke="#0c0c6c" stroke-width="0.9"/><rect x="-2" y="-8" width="4" height="4" fill="#3838d0" stroke="#0c0c6c" stroke-width="0.9"/><rect x="4" y="-8" width="4" height="4" fill="#3838d0" stroke="#0c0c6c" stroke-width="0.9"/><rect x="-8" y="-2" width="4" height="4" fill="#3838d0" stroke="#0c0c6c" stroke-width="0.9"/><rect x="-2" y="-2" width="4" height="4" fill="#3838d0" stroke="#0c0c6c" stroke-width="0.9"/><rect x="4" y="-2" width="4" height="4" fill="#3838d0" stroke="#0c0c6c" stroke-width="0.9"/><rect x="-8" y="4" width="4" height="4" fill="#3a4a3a" stroke="#0c0c6c" stroke-width="0.9"/><rect x="-2" y="4" width="4" height="4" fill="#3838d0" stroke="#0c0c6c" stroke-width="0.9"/><rect x="4" y="4" width="4" height="4" fill="#3838d0" stroke="#0c0c6c" stroke-width="0.9"/></g>
<g transform="translate(44,659)"><circle cx="0" cy="-5.5" r="2.3" fill="#5a5ae0" stroke="#0c0c5c" stroke-width="0.7"/><circle cx="5" cy="-1" r="2.3" fill="#5a5ae0" stroke="#0c0c5c" stroke-width="0.7"/><circle cx="-5" cy="-1" r="2.3" fill="#5a5ae0" stroke="#0c0c5c" stroke-width="0.7"/><circle cx="3" cy="5" r="2.3" fill="#5a5ae0" stroke="#0c0c5c" stroke-width="0.7"/><circle cx="-3" cy="5" r="2.3" fill="#3a4a3a" stroke="#0c0c5c" stroke-width="0.7"/></g>
<path d="M35,674.5H56" stroke="#7f8298" stroke-width="1"/>
<g transform="translate(44,690)"><path d="M-7.5,-7.5H4L8,-3.5V8H-3.5L-7.5,4Z" fill="#f0f2f9" stroke="#0c0c14" stroke-width="1.3"/><path d="M-7.5,-7.5L-3.5,-3.5H8M-3.5,-3.5V8" fill="none" stroke="#0c0c14" stroke-width="1.3"/><path d="M-2,-3V7.5" stroke="#1a3fe0" stroke-width="2"/></g>
<g transform="translate(44,713)"><path d="M-8,-7H7.5V1.5L1.5,7.5" fill="none" stroke="#0c0c14" stroke-width="2.1"/><path d="M-8,-2.5H3V-1L-4.5,7" fill="none" stroke="#1a2fc0" stroke-width="2.1"/></g>
<g transform="translate(44,736)"><path d="M0,-8C5,-6 4,3 7.5,5.5H-7.5C-4,3 -5,-6 0,-8Z" fill="#e8eaf4" stroke="#23233a" stroke-width="1.7"/><path d="M-7.5,6H7.5" stroke="#15154a" stroke-width="2"/><path d="M0,-4V4" stroke="#111" stroke-width="1.6" stroke-dasharray="2 1.4"/><path d="M0,6.5V9" stroke="#111" stroke-width="1.5"/></g>
<g transform="translate(44,759)"><path d="M1,-8.5V8.5M-8,3H8" stroke="#1a2fd0" stroke-width="1.9"/><path d="M-7.5,-3H1" stroke="#1a2fd0" stroke-width="1.9"/><path d="M1,-2L8,-5.5M1,-2L8,-1.5" stroke="#5a5a2a" stroke-width="1.2"/><circle cx="-4.5" cy="-6" r="2" fill="none" stroke="#1a2fd0" stroke-width="1.3"/><circle cx="-4.5" cy="0" r="2" fill="none" stroke="#1a2fd0" stroke-width="1.3"/></g>
<g transform="translate(44,782)"><path d="M-8,6.5H8" stroke="#0c0c14" stroke-width="2"/><path d="M0,-8.5V6.5" stroke="#0c0c14" stroke-width="2"/><path d="M0,1H5V6" fill="none" stroke="#1a2fc0" stroke-width="1.7"/></g>
<g transform="translate(44,805)"><path d="M-8,7H8" stroke="#0c0c14" stroke-width="2"/><path d="M0.5,-8.5V6" stroke="#0c0c14" stroke-width="1.5"/><g transform="translate(0,-3.2)"><circle cx="-5.2" cy="4.8" r="2.15" fill="#cfe0f6" stroke="#2a4a8a" stroke-width="0.95"/><circle cx="-0.3" cy="4.8" r="2.15" fill="#cfe0f6" stroke="#2a4a8a" stroke-width="0.95"/><path d="M-7.3,4 L-3.2,-1.4 M1.8,4.2 L4.2,1.6 L5.2,2.6" fill="none" stroke="#2a4a8a" stroke-width="0.95"/></g></g>
<g transform="translate(75,84)"><path d="M-8.5,2.6H-2V4.8H-8.5Z" fill="#f0c020" stroke="#7a5a00" stroke-width="0.6"/><path d="M-8.5,2V5.6" stroke="#333" stroke-width="1"/><path d="M-3,5V-2.5C-3,-5 -1,-6.5 1.5,-6.5H5.5C7.5,-6.5 8.2,-5 8.2,-3.5V3.5C8.2,4.5 7.4,5 6.5,5Z" fill="#5a90dc" stroke="#183a8a" stroke-width="1"/><rect x="0" y="-4.2" width="5.6" height="7" rx="1.6" fill="#e4e9f4" stroke="#183a8a" stroke-width="0.7"/><rect x="1.2" y="-1.6" width="3.2" height="2.4" rx="0.8" fill="#f2c21c" stroke="#4a3800" stroke-width="0.6"/></g>
<g transform="translate(75,107)"><path d="M-8,-1.5L3,-7L8,0L-3,6.5Z" fill="url(#gor)" stroke="#b05a00" stroke-width="0.8"/><path d="M-4.5,-3L0.5,4.5M-1,-4.8L4,2.5" stroke="#fbe28a" stroke-width="1.4"/><path d="M-3,6.5L-2,9" stroke="#b05a00" stroke-width="1"/><path d="M3,-8.5L6.5,-5M6.8,-8V-4.6H3.4" fill="none" stroke="#1a4ad0" stroke-width="1.5"/></g>
<g transform="translate(75,130)"><path d="M-8,5.5C-8,-7 8,-7 8,5.5C5,2 -5,2 -8,5.5Z" fill="url(#gor)" stroke="#a85400" stroke-width="0.9"/><path d="M0,-9V9" stroke="#111" stroke-width="1.1" stroke-dasharray="3 1.4 1 1.4"/></g>
<g transform="translate(75,153)"><g fill="#c4c7d4" stroke="#9a9dae" stroke-width="1"><path d="M7,-7H0C-5,-7 -8,-4 -8,0C-8,4 -5,7.5 0,7.5H7V3.5H1C-2,3.5 -3.5,2.5 -3.5,0C-3.5,-2.5 -2,-3 1,-3H7Z" fill="url(#ggr)"/></g></g>
<g transform="translate(75,176)"><g fill="#c4c7d4" stroke="#9a9dae" stroke-width="1"><path d="M-3,-8H3C3,-3 6.5,-1 7.5,3L0,8L-7.5,3C-6.5,-1 -3,-3 -3,-8Z"/></g></g>
<g transform="translate(75,199)"><g fill="#c4c7d4" stroke="#9a9dae" stroke-width="1"><path d="M-8,1L-2,-5L1,-2.5L4,-5.5L8,-1L2,6L-1,3L-4,5.5Z" fill="#e6e8ee"/><path d="M-2,-5L2,6M4,-5.5L-4,5.5" fill="none" stroke-width="0.8"/></g></g>
<g transform="translate(75,222)"><g fill="#c4c7d4" stroke="#9a9dae" stroke-width="1"><path d="M-8,-1L1,-6.5L8,-1.5L-1,5.5Z" fill="#e6e8ee"/><path d="M-4,-1L1,-3.5L4.5,-1L-0.5,2.5Z" fill="#c6c9d3"/><path d="M-8,-1V1.5L-1,8L8,1V-1.5" fill="none"/></g></g>
<g transform="translate(75,245)"><path d="M-7.5,-4.5L7.5,-8V4.5L-7.5,8Z" fill="url(#gor)" stroke="#c07a10" stroke-width="0.8"/></g>
<g transform="translate(75,268)"><g fill="#c4c7d4" stroke="#9a9dae" stroke-width="1"><rect x="-7.5" y="-8" width="9" height="9" fill="#e6e8ee"/><rect x="-4" y="-5" width="9" height="9" fill="#dcdee6"/><rect x="-1" y="-1.5" width="9" height="9" fill="#c9ccd6"/></g></g>
<g transform="translate(75,291)"><g fill="#c4c7d4" stroke="#9a9dae" stroke-width="1"><path d="M-8,-5L-5,-8H4V0H-8Z" fill="#e6e8ee"/><path d="M-4,-2L-1,-5H8V5L5,8H-4Z" fill="#d8dae3"/><rect x="-4" y="-2" width="9" height="10" fill="#cfd2db"/></g></g>
<g transform="translate(75,314)"><g fill="#c4c7d4" stroke="#9a9dae" stroke-width="1"><path d="M-5.5,-2C-5.5,-9.5 5.5,-9.5 5.5,-2Z" fill="url(#ggr)"/><path d="M-8,-1.5H8V2H-8Z" fill="#cfd2db"/><path d="M-5.5,2.5C-5.5,9 5.5,9 5.5,2.5Z" fill="#dcdee6"/></g></g>
<g transform="translate(75,337)"><g fill="#c4c7d4" stroke="#9a9dae" stroke-width="1"><path d="M-8,8V2C-8,-3 -3,-5 1,-6V-9H8V-2C3,-1 -1,0 -1,4V8Z" fill="url(#ggr)"/><path d="M-8,3.5H-1M-5,-2L-1,2M1,-6L4,-1.5" fill="none" stroke-width="0.8"/></g></g>
<g transform="translate(75,360)"><g fill="#c4c7d4" stroke="#9a9dae" stroke-width="1"><path d="M-4.5,-1C-4.5,-9 4.5,-9 4.5,-1Z" fill="#e9ebf1"/><ellipse cx="0" cy="1" rx="8" ry="2.6" fill="#d0d3dc"/><path d="M-5,4C-2,8 2,8 5,4" fill="none"/></g></g>
<g transform="translate(75,383)"><g fill="#c4c7d4" stroke="#9a9dae" stroke-width="1"><circle cx="-2" cy="-2.5" r="5.3" fill="#e6e8ee"/><circle cx="2.5" cy="2.5" r="5.5" fill="#d0d3dc"/><path d="M0,0L5,5M5,0L0,5" fill="none" stroke="#9a9dae" stroke-width="1.7"/></g></g>
<g transform="translate(75,406)"><g fill="#c4c7d4" stroke="#9a9dae" stroke-width="1"><path d="M-7,-4.5L0,-8L7,-4.5V4L0,8L-7,4Z" fill="#e6e8ee"/><path d="M-7,-4.5L0,-1L7,-4.5M0,-1V8M-3.5,-6.2L3.5,-2.7" fill="none"/></g></g>
<g transform="translate(75,429)"><g fill="#c4c7d4" stroke="#9a9dae" stroke-width="1"><path d="M-7,-8H-3L0,-3.5L3,-8H7V-3L4.5,0V8.5H-4.5V0L-7,-3Z" fill="#e6e8ee"/><path d="M0,-3.5V8.5" fill="none"/><circle cx="0" cy="0" r="1.2" fill="#eef0f5"/></g></g>
<path d="M66,443.5H87" stroke="#8d90a6" stroke-width="1"/>
<g transform="translate(75,460)"><g fill="#c4c7d4" stroke="#9a9dae" stroke-width="1"><path d="M-7,-7.5H5L7.5,-5.5V-2L5,0H-7Z" fill="#dcdee6"/><path d="M-5,-1H7.5V3.5L5,6H-7.5V1.5Z" fill="#e6e8ee"/><path d="M-6,-4.5H5M-6,2.5H6" fill="none" stroke-width="0.8"/></g></g>
<g transform="translate(75,483)"><g fill="#c4c7d4" stroke="#9a9dae" stroke-width="1"><path d="M-8,-1L-3,-6L0,-3.5L3,-6.5L8,-2L3,3.5L0,1L-4,4.5Z" fill="#e6e8ee"/><path d="M2,2L7.5,7.5M7.5,3.5V7.5H3.5" fill="none" stroke-width="1.4"/></g></g>
<g transform="translate(75,506)"><g fill="#c4c7d4" stroke="#9a9dae" stroke-width="1"><path d="M-8,-1L-4,-6C-1,-3 2,-7 6,-5.5L8,0C4,-1.5 1,2.5 -3,6Z" fill="#e6e8ee"/><path d="M-6,1C-2,-2 2,3 6,-2" fill="none" stroke-width="0.8"/></g></g>
<g transform="translate(75,529)"><g fill="#c4c7d4" stroke="#9a9dae" stroke-width="1"><path d="M-8,0L-1,-7L8,-2L1,6.5Z" fill="#e6e8ee"/><path d="M-1,-7L1,6.5M-4.5,-3.5L4.5,2" fill="none" stroke-width="0.8"/></g></g>
<g transform="translate(75,552)"><g fill="#c4c7d4" stroke="#9a9dae" stroke-width="1"><path d="M-8,-4L-5,-7H3V4L0,7H-8Z" fill="#c9ccd6"/><path d="M-8,-4H0V7M0,-4L3,-7" fill="none"/><path d="M6.5,-8V5" fill="none" stroke-width="1.5"/><circle cx="6.5" cy="6.5" r="1.5" fill="#a9acb9"/></g></g>
<g transform="translate(75,575)"><g fill="#c4c7d4" stroke="#9a9dae" stroke-width="1"><path d="M-8,-3L-4,-7L0,-4.5L-4,-0.5Z" fill="#e6e8ee"/><path d="M-8,8V3C-4,-1 0,5 4,0L8,2V8Z" fill="#c9ccd6"/><path d="M5,-8V-2M3,-4L5,-1.5L7,-4" fill="none" stroke-width="1.3"/></g></g>
<g transform="translate(75,598)"><g fill="#c4c7d4" stroke="#9a9dae" stroke-width="1"><path d="M-8,-5L-4,-8L0,-5L-4,-2Z" fill="#e6e8ee"/><path d="M0,4L4,0.5L8,4L4,7.5Z" fill="#c9ccd6"/><path d="M2,-7C5,-7 7,-5 6.5,-2M-7,2L-3,6.5M-7,6.5H-3V3" fill="none" stroke-width="1.4"/></g></g>
<g transform="translate(75,621)"><g fill="#c4c7d4" stroke="#9a9dae" stroke-width="1"><path d="M-8,-5L-5.5,-7.5H8V5.5L5.5,8H-8Z" fill="#e4e6ed"/><rect x="-8" y="-5" width="13.5" height="13" fill="#eceef3"/><path d="M-6,-3L3.5,6M3.5,-3L-6,6" fill="none" stroke="#9a9dae" stroke-width="1.3"/></g></g>
<g transform="translate(75,644)"><g fill="#c4c7d4" stroke="#9a9dae" stroke-width="1"><rect x="-6.5" y="-8" width="8" height="14" rx="3" fill="#b9bcc9"/><path d="M-2.5,-8V-2M-6.5,-2H1.5" fill="none" stroke="#d4d6e0"/><circle cx="4" cy="3.5" r="4.2" fill="#f1f2f6"/><path d="M4,1V3.5H6" fill="none" stroke="#8d90a2"/></g></g>
<g transform="translate(75,667)"><path d="M0,-8V6.5M-7.5,-5.5H7.5M-7.5,7.5H7.5" stroke="#1f44a8" stroke-width="2"/><path d="M-5,-5L-8,2H-2ZM5,-5L2,2H8Z" fill="none" stroke="#5a5a6a" stroke-width="0.7"/><circle cx="-5" cy="2" r="2.9" fill="#f6c428" stroke="#8a6200" stroke-width="0.7"/><circle cx="5" cy="2" r="2.9" fill="#f6c428" stroke="#8a6200" stroke-width="0.7"/></g>
<g transform="translate(75,690)"><g fill="#c4c7d4" stroke="#9a9dae" stroke-width="1"><rect x="-5" y="-8" width="8" height="8" fill="#e6e8ee"/><rect x="0" y="-3" width="8" height="8" fill="#dcdee6"/><path d="M-8,1.5L-3.5,6.5M-8,6.5H-3.5V2.5" fill="none" stroke-width="1.4"/></g></g>
<g transform="translate(75,713)"><g fill="#c4c7d4" stroke="#9a9dae" stroke-width="1"><path d="M-8,0L0,-7L8,0L5,0.8V2.5L0,-2L-5,2.5V0.8Z"/><path d="M-5,2.5H5V7.5H-5Z" fill="#e6e8ee"/></g></g>
<g transform="translate(75,736)"><g fill="#c4c7d4" stroke="#9a9dae" stroke-width="1"><path d="M-4.5,-7.5H4.5L7,-2H-7Z" fill="#e6e8ee"/><path d="M-8,-1.5H8V1.5H-8Z" fill="#dcdee6"/><path d="M-7,2L-4.5,7.5H4.5L7,2Z" fill="#e6e8ee"/></g></g>
<rect x="89" y="57.8" width="127" height="2.4" fill="#a3a8be"/><rect x="89" y="60" width="127" height="1.3" fill="#6e7290"/><rect x="89" y="61.3" width="127" height="1" fill="#c9ccda"/>
<path d="M90,88V69Q90,65.5 93.5,65.5H112.5Q116,65.5 116,69V86.5H215.5" fill="#e9ebf3" stroke="#9da1b8" stroke-width="1"/>
<rect x="90.5" y="86" width="25" height="3" fill="#e6e8f0"/>
<path d="M118,86V69Q118,65.5 121.5,65.5H140.0Q143.5,65.5 143.5,69V86Z" fill="#c3c6da" stroke="#8f93ad" stroke-width="1"/>
<path d="M146,86V69Q146,65.5 149.5,65.5H168.0Q171.5,65.5 171.5,69V86Z" fill="#c3c6da" stroke="#8f93ad" stroke-width="1"/>
<path d="M174,86V69Q174,65.5 177.5,65.5H181V86Z" fill="#c3c6da" stroke="#8f93ad" stroke-width="1"/><rect x="177.5" y="75" width="1.3" height="1.5" fill="#8084a0"/>
<rect x="181.5" y="66.5" width="17.5" height="18.5" fill="#dededf" stroke="#f8f8fa" stroke-width="1.2"/><rect x="200.5" y="66.5" width="15" height="18.5" fill="#dededf" stroke="#f8f8fa" stroke-width="1.2"/><path d="M181,85.6H215.5" stroke="#a0a2b0" stroke-width="1"/><path d="M199.7,66V86" stroke="#a9acb9" stroke-width="1"/>
<path d="M192,72L188.5,75.5L192,79Z" fill="#5c6790"/><path d="M208,72L211.5,75.5L208,79Z" fill="#4f5fae"/>
<g transform="translate(102,76)"><path d="M-7.5,-6L-4.5,-7.2L-3,-5.6L-2.6,-7.4L0,-8.2L2.6,-7L3.2,-3.8L7.6,1.4V5L2,8.2L-7.5,-2.4Z" fill="#d9b51c" stroke="#120f04" stroke-width="1.3" stroke-linejoin="round"/><path d="M-7.5,-6L2,4.4V8.2L-7.5,-2.4Z" fill="#f8e23a"/><path d="M2,4.4L7.6,1.4V5L2,8.2Z" fill="#eac820"/><path d="M-2.4,-1.2V-4.6L0.4,-6L3.2,-3.8L3.4,-0.4L0.6,1.2Z" fill="#f2d428"/><path d="M-7.5,-6L2,4.4L7.6,1.4M2,4.4V8.2M-2.4,-0.8V-4.6L0.4,-6L3.2,-3.8M-2.4,-4.6L-3,-5.6M0.6,1.6V-1.8L3.4,-3.4M0.6,-1.8L-2.4,-4.6" fill="none" stroke="#120f04" stroke-width="0.9"/></g>
<g transform="translate(130.5,76.5)"><rect x="-7.5" y="-2.5" width="13" height="10.5" fill="#eef0f6" stroke="#6a6d80" stroke-width="1.1"/><path d="M-5,-2.5L1,-7.5L7.5,-4.5L3,-1" fill="#f0d6a0" stroke="#a07a3a" stroke-width="0.9"/><path d="M-5.5,1H-3.5M-1.5,1H3.5M-5.5,4.5H-3.5M-1.5,4.5H3.5" stroke="#8a8da0" stroke-width="1.3"/><rect x="-6" y="0" width="2" height="2" fill="#e8d040"/></g>
<g transform="translate(158.5,76)"><path d="M-6.5,-8V7M-6.5,-4H-2M-6.5,4.3H1" fill="none" stroke="#16161c" stroke-width="1.1"/><rect x="-2.3" y="-7.3" width="6.2" height="6.2" rx="1.8" fill="#f2e030" stroke="#16161c" stroke-width="1.6"/><rect x="1.2" y="1.2" width="6.2" height="6.2" rx="1.8" fill="#f2e030" stroke="#16161c" stroke-width="1.6"/></g>
<rect x="90.5" y="89.5" width="125" height="16.5" rx="8" fill="url(#gsearch)" stroke="#8c90a6" stroke-width="1.5"/>
<path d="M97,92.5H109L104.6,97.5V102.5H101.4V97.5Z" fill="#4aa0f0" stroke="#0c2a9c" stroke-width="1"/><path d="M99.5,93.7H106.5" stroke="#c8e4fb" stroke-width="1"/>
<rect x="89" y="324.5" width="127" height="2" fill="#a4a8ba"/><rect x="89" y="326.5" width="127" height="1" fill="#eceef4"/>
<path d="M99.5,128V316.5" stroke="#8a8da2" stroke-width="1" stroke-dasharray="1 1.6"/>
<path d="M100,136.5H110" stroke="#8a8da2" stroke-width="1" stroke-dasharray="1 1.6"/>
<path d="M100,172.5H110" stroke="#8a8da2" stroke-width="1" stroke-dasharray="1 1.6"/>
<path d="M100,190.5H110" stroke="#8a8da2" stroke-width="1" stroke-dasharray="1 1.6"/>
<path d="M100,208.5H110" stroke="#8a8da2" stroke-width="1" stroke-dasharray="1 1.6"/>
<path d="M100,226.5H110" stroke="#8a8da2" stroke-width="1" stroke-dasharray="1 1.6"/>
<path d="M100,244.5H110" stroke="#8a8da2" stroke-width="1" stroke-dasharray="1 1.6"/>
<path d="M100,262.5H110" stroke="#8a8da2" stroke-width="1" stroke-dasharray="1 1.6"/>
<path d="M100,280.5H110" stroke="#8a8da2" stroke-width="1" stroke-dasharray="1 1.6"/>
<path d="M100,316.5H110" stroke="#8a8da2" stroke-width="1" stroke-dasharray="1 1.6"/>
<path d="M104,154.5H110" stroke="#8a8da2" stroke-width="1" stroke-dasharray="1 1.6"/>
<rect x="95.5" y="150" width="8.5" height="8.5" rx="1" fill="#f6f7fb" stroke="#8d91a8" stroke-width="1"/><path d="M97.5,154.3H102M99.75,152V156.6" stroke="#2a3a78" stroke-width="1"/>
<path d="M104,172.5H110" stroke="#8a8da2" stroke-width="1" stroke-dasharray="1 1.6"/>
<rect x="95.5" y="168" width="8.5" height="8.5" rx="1" fill="#f6f7fb" stroke="#8d91a8" stroke-width="1"/><path d="M97.5,172.3H102M99.75,170V174.6" stroke="#2a3a78" stroke-width="1"/>
<path d="M104,298.5H110" stroke="#8a8da2" stroke-width="1" stroke-dasharray="1 1.6"/>
<rect x="95.5" y="294" width="8.5" height="8.5" rx="1" fill="#f6f7fb" stroke="#8d91a8" stroke-width="1"/><path d="M97.5,298.3H102M99.75,296V300.6" stroke="#2a3a78" stroke-width="1"/>
<g transform="translate(99,118.5)"><rect x="-8.2" y="-6.5" width="6.2" height="14.5" rx="2" fill="#1a1a1a"/><circle cx="-5.1" cy="-1.2" r="2.5" fill="#e02a1a"/><circle cx="-5.1" cy="4.6" r="2.5" fill="#2fd02f"/><circle cx="-6.4" cy="-5" r="0.9" fill="#e6c020"/><g transform="translate(2.3,0.3) scale(0.82)"><path d="M-7.5,-6L-4.5,-7.2L-3,-5.6L-2.6,-7.4L0,-8.2L2.6,-7L3.2,-3.8L7.6,1.4V5L2,8.2L-7.5,-2.4Z" fill="#d9b51c" stroke="#120f04" stroke-width="1.3" stroke-linejoin="round"/><path d="M-7.5,-6L2,4.4V8.2L-7.5,-2.4Z" fill="#f8e23a"/><path d="M2,4.4L7.6,1.4V5L2,8.2Z" fill="#eac820"/><path d="M-2.4,-1.2V-4.6L0.4,-6L3.2,-3.8L3.4,-0.4L0.6,1.2Z" fill="#f2d428"/><path d="M-7.5,-6L2,4.4L7.6,1.4M2,4.4V8.2M-2.4,-0.8V-4.6L0.4,-6L3.2,-3.8M-2.4,-4.6L-3,-5.6M0.6,1.6V-1.8L3.4,-3.4M0.6,-1.8L-2.4,-4.6" fill="none" stroke="#120f04" stroke-width="0.9"/></g></g>
<g transform="translate(118,136)"><path d="M-7.5,7V-5.5L-6.5,-7H-2L-0.5,-5.5H7.5V7Z" fill="url(#gfold2)" stroke="#c08a10" stroke-width="1"/><circle cx="0.5" cy="1" r="4.3" fill="#f4f6fb" stroke="#3a3a4a" stroke-width="1.1"/><path d="M-1.8,3.3L2.8,-1.3" stroke="#2a5ad0" stroke-width="1.3"/></g>
<g transform="translate(118,154)"><path d="M-7.5,0L0,-7.5L7.5,-0.5L0,6Z" fill="#f6dc3a" stroke="#4a3c00" stroke-width="1"/><path d="M-7.5,0V2.5L0,8.5L7.5,2V-0.5" fill="#e9e9ee" stroke="#3a3a44" stroke-width="0.9"/><path d="M-7.5,1.5L0,7.5L7.5,1" fill="none" stroke="#6a6a78" stroke-width="0.7"/></g>
<g transform="translate(118,172)"><path d="M-7.5,7V-5.5L-6.5,-7H-2L-0.5,-5.5H7.5V7Z" fill="url(#gfold2)" stroke="#c08a10" stroke-width="1"/><text x="-4.6" y="6" font-family="Liberation Serif,serif" font-weight="bold" font-size="12.5" fill="#20269c">A</text></g>
<g transform="translate(118,190)"><path d="M-7.5,7V-5.5L-6.5,-7H-2L-0.5,-5.5H7.5V7Z" fill="url(#gfold2)" stroke="#c08a10" stroke-width="1"/><text x="-4" y="5.5" font-family="Liberation Sans,sans-serif" font-weight="bold" font-size="11.5" fill="#20245c">Σ</text></g>
<g transform="translate(118,208)"><path d="M-3,-6.5H5.5M-3,0H5.5M-3,6H5.5" stroke="#22222a" stroke-width="1.8"/><circle cx="-6" cy="-5.5" r="2.3" fill="#d82030"/><circle cx="-6" cy="0" r="2.3" fill="#2838d0"/><circle cx="-6" cy="5.5" r="2.3" fill="#2fb83f"/></g>
<g transform="translate(118,226)"><path d="M-7,-0.5L0,-7L7,0L0,7Z" fill="none" stroke="#15151c" stroke-width="1"/><path d="M-3,-1.5L3.5,3.5M-7,-7L-5,-5M5,5.5L7.5,8" stroke="#15151c" stroke-width="1"/></g>
<g transform="translate(118,244)"><path d="M-7,-0.5L0,-7L7,0L0,7Z" fill="none" stroke="#15151c" stroke-width="1"/><path d="M-3,-1.5L3.5,3.5M-7,-7L-5,-5M5,5.5L7.5,8" stroke="#15151c" stroke-width="1"/></g>
<g transform="translate(118,262)"><path d="M-7,-0.5L0,-7L7,0L0,7Z" fill="none" stroke="#15151c" stroke-width="1"/><path d="M-3,-1.5L3.5,3.5M-7,-7L-5,-5M5,5.5L7.5,8" stroke="#15151c" stroke-width="1"/></g>
<g transform="translate(118,280)"><path d="M-2.5,5V-6.5M-2.5,5H5" stroke="#b01030" stroke-width="1.1"/><path d="M-2.5,-8L-4.8,-5H-0.2ZM6.5,5L3.5,2.8V7.2Z" fill="#b01030"/><path d="M-5,2.5L0,7.5M0,2.5L-5,7.5M-2.5,2V8M-5.5,5H0.5" stroke="#1a1a22" stroke-width="0.8"/></g>
<g transform="translate(118,298)"><path d="M-7.5,-5L-4.5,-8H5L7.5,-5.5V5L4.5,8H-7.5Z" fill="#fff3a0" stroke="#2a2408" stroke-width="0.9"/><rect x="-7.5" y="-5" width="12" height="13" fill="url(#gyel)" stroke="#2a2408" stroke-width="0.9"/><path d="M-1,0L2,-2.5H8V4.5L5.5,8H-1Z" fill="#2fbf3f" stroke="#0f6a1a" stroke-width="0.8"/><rect x="2.5" y="2.5" width="5.5" height="5.5" fill="#7fe08a" stroke="#0f6a1a" stroke-width="0.8"/></g>
<g transform="translate(118,316)"><path d="M-7,-7.5H-2.5M-7,-7.5V7H8" fill="none" stroke="#1a2ad0" stroke-width="2"/><path d="M-4.5,0L5,-5.8L6.8,-3L-2.8,2.6Z" fill="#f4c430" stroke="#4a3400" stroke-width="0.8"/><path d="M5,-5.8L6.5,-6.7C7.6,-7 8.6,-5.2 8,-4L6.8,-3Z" fill="#c88a4a"/><rect x="-8.5" y="-2" width="5" height="10.5" rx="1.5" fill="#1a1a1a"/><circle cx="-6" cy="0.5" r="2.1" fill="#d83020"/><circle cx="-6" cy="5.8" r="2.1" fill="#2fd02f"/></g>
<path d="M215.5,546H223Q225.3,546 225.3,548.3V571Q225.3,573.3 223,573.3H215.5Z" fill="#e6e8f0"/><path d="M217.5,545.7H223Q225.6,545.7 225.6,548.3V571Q225.6,573.6 223,573.6H217.5" fill="none" stroke="#4f546a" stroke-width="1.1"/>
<path d="M223.2,549.1999999999999L219.8,551.8L223.2,554.4Z" fill="#666a84"/>
<path d="M223.2,556.9L219.8,559.5L223.2,562.1Z" fill="#666a84"/>
<path d="M223.2,564.6L219.8,567.2L223.2,569.8000000000001Z" fill="#666a84"/>
<g opacity="0.9"><path d="M2,9L6,4.5L21.5,6.5L22,19L12,24L3,19Z" fill="#dba3a9"/><path d="M2,9L13,11.5L21.5,6.5M13,11.5L12,24" fill="none" stroke="#c98289" stroke-width="0.8"/><path d="M2,9L13,11.5L12,24L3,19Z" fill="#d4929a"/><path d="M13,11.5L21.5,6.5L22,19L12,24Z" fill="#cf8a93"/><path d="M2,9L6,4.5L21.5,6.5L13,11.5Z" fill="#e9c3c6"/></g>
<text x="2.6" y="20.6" font-size="12.4" font-weight="bold" fill="#fdf6f6" textLength="9" lengthAdjust="spacingAndGlyphs" transform="skewY(12) translate(0,-1.2)">S</text>
<text x="12.4" y="20.8" font-size="12.4" font-weight="bold" fill="#fdf6f6" textLength="9.2" lengthAdjust="spacingAndGlyphs" transform="skewY(-22) translate(0,5.9)">W</text>
<text x="26" y="20.2" font-size="17.5" font-weight="bold" textLength="88" lengthAdjust="spacingAndGlyphs" stroke-width="0.5"><tspan fill="url(#glogo)" stroke="url(#glogo)">Solid</tspan><tspan fill="url(#glogo2)" stroke="url(#glogo2)">Works</tspan></text>
<g transform="translate(556,14)"><path d="M-3.2,3L-5.6,5.6" stroke="#2c2c36" stroke-width="1.3"/><circle cx="-1" cy="0.8" r="3.3" fill="#dcdce2" stroke="#4c4e5c" stroke-width="1"/><circle cx="2" cy="-3.4" r="3.1" fill="#ececf0" stroke="#4c4e5c" stroke-width="1"/><path d="M0.5,-5C1.5,-5.8 3,-5.6 3.8,-4.6" fill="none" stroke="#fff" stroke-width="0.9"/></g>
</svg>
</body></html>
